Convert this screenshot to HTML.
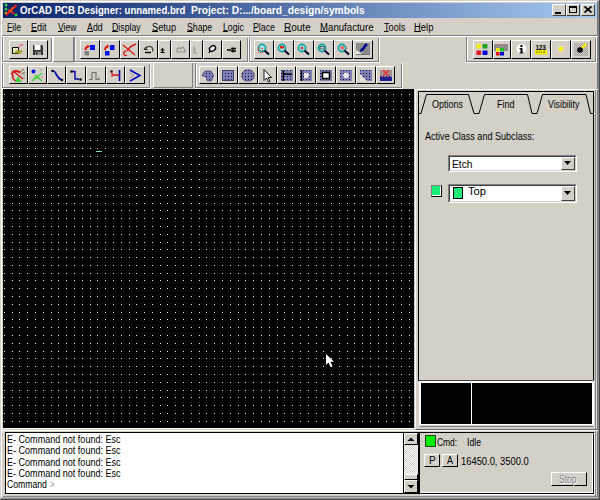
<!DOCTYPE html>
<html><head><meta charset="utf-8"><style>
html,body{margin:0;padding:0;width:600px;height:500px;overflow:hidden;background:#d4d0c8}
body{position:relative;font-family:"Liberation Sans",sans-serif}
div{position:absolute}
.t{position:absolute;white-space:pre;line-height:1;color:#000;transform-origin:0 0}
u{text-decoration:underline;text-underline-offset:0px}
</style></head><body>
<div style="left:0px;top:0px;width:600px;height:500px;background:#d4d0c8"></div>
<div style="left:1px;top:1px;width:597px;height:1px;background:#fff"></div>
<div style="left:1px;top:1px;width:1px;height:497px;background:#fff"></div>
<div style="left:599px;top:0px;width:1px;height:500px;background:#454545"></div>
<div style="left:0px;top:499px;width:600px;height:1px;background:#454545"></div>
<div style="left:598px;top:1px;width:1px;height:498px;background:#8a8a8a"></div>
<div style="left:1px;top:498px;width:598px;height:1px;background:#8a8a8a"></div>
<div style="left:597px;top:1px;width:1px;height:497px;background:#7a7a7a"></div>
<div style="left:1px;top:497px;width:597px;height:1px;background:#b8b8b8"></div>
<div style="left:596px;top:89px;width:1px;height:408px;background:#d8d8d8"></div>
<div style="left:3px;top:496px;width:594px;height:1px;background:#888"></div>
<div style="left:595px;top:89px;width:1px;height:408px;background:#888"></div>
<div style="left:3px;top:3px;width:594px;height:15px;background:linear-gradient(to right,#0a246a,#a6caf0)"></div>
<svg style="position:absolute;left:4px;top:3px" width="14" height="14" viewBox="0 0 14 14">
<circle cx="2" cy="2" r="1.5" fill="#30d040"/><circle cx="2" cy="6" r="1.5" fill="#30d040"/><circle cx="2" cy="10" r="1.5" fill="#90c030"/>
<path d="M2 12 L12.5 2" stroke="#e82010" stroke-width="2.4"/><path d="M4 6.5 L10.5 11" stroke="#e02818" stroke-width="2"/><path d="M6 9 l3-5" stroke="#f07010" stroke-width="1.3"/>
<circle cx="12" cy="12" r="1.4" fill="#30d040"/></svg>
<span class="t" style="left:20.00px;top:5px;font:bold 11px 'Liberation Sans';line-height:1;transform:scaleX(0.873);color:#fff">OrCAD PCB Designer: unnamed.brd</span>
<span class="t" style="left:191.08px;top:5px;font:bold 11px 'Liberation Sans';line-height:1;transform:scaleX(0.925);color:#fff">Project: D:.../board_design/symbols</span>
<div style="left:552px;top:4px;width:14px;height:12px;background:#d4d0c8;border-top:1px solid #fff;border-left:1px solid #fff;border-right:1px solid #404040;border-bottom:1px solid #404040;box-sizing:border-box"></div>
<div style="left:555px;top:12px;width:6px;height:2px;background:#000"></div>
<div style="left:566px;top:4px;width:14px;height:12px;background:#d4d0c8;border-top:1px solid #fff;border-left:1px solid #fff;border-right:1px solid #404040;border-bottom:1px solid #404040;box-sizing:border-box"></div>
<div style="left:569px;top:6px;width:8px;height:7px;border:1px solid #000;border-top-width:2px;box-sizing:border-box"></div>
<div style="left:581px;top:4px;width:14px;height:12px;background:#d4d0c8;border-top:1px solid #fff;border-left:1px solid #fff;border-right:1px solid #404040;border-bottom:1px solid #404040;box-sizing:border-box"></div>
<svg style="position:absolute;left:584px;top:6px" width="8" height="7" viewBox="0 0 8 7"><path d="M0.5 0.5 L7.5 6.5 M7.5 0.5 L0.5 6.5" stroke="#000" stroke-width="1.6"/></svg>
<span class="t" style="left:7.13px;top:23px;font:10px 'Liberation Sans';line-height:1;transform:scaleX(0.867);"><u>F</u>ile</span>
<span class="t" style="left:30.59px;top:23px;font:10px 'Liberation Sans';line-height:1;transform:scaleX(0.906);"><u>E</u>dit</span>
<span class="t" style="left:58.00px;top:23px;font:10px 'Liberation Sans';line-height:1;transform:scaleX(0.857);"><u>V</u>iew</span>
<span class="t" style="left:87.00px;top:23px;font:10px 'Liberation Sans';line-height:1;transform:scaleX(0.882);"><u>A</u>dd</span>
<span class="t" style="left:112.12px;top:23px;font:10px 'Liberation Sans';line-height:1;transform:scaleX(0.875);"><u>D</u>isplay</span>
<span class="t" style="left:152.08px;top:23px;font:10px 'Liberation Sans';line-height:1;transform:scaleX(0.920);"><u>S</u>etup</span>
<span class="t" style="left:186.63px;top:23px;font:10px 'Liberation Sans';line-height:1;transform:scaleX(0.870);"><u>S</u>hape</span>
<span class="t" style="left:223.13px;top:23px;font:10px 'Liberation Sans';line-height:1;transform:scaleX(0.870);"><u>L</u>ogic</span>
<span class="t" style="left:253.12px;top:23px;font:10px 'Liberation Sans';line-height:1;transform:scaleX(0.875);"><u>P</u>lace</span>
<span class="t" style="left:284.00px;top:23px;font:10px 'Liberation Sans';line-height:1;transform:scaleX(1.000);"><u>R</u>oute</span>
<span class="t" style="left:320.04px;top:23px;font:10px 'Liberation Sans';line-height:1;transform:scaleX(0.963);"><u>M</u>anufacture</span>
<span class="t" style="left:384.00px;top:23px;font:10px 'Liberation Sans';line-height:1;transform:scaleX(0.913);"><u>T</u>ools</span>
<span class="t" style="left:414.05px;top:23px;font:10px 'Liberation Sans';line-height:1;transform:scaleX(0.947);"><u>H</u>elp</span>
<div style="left:2px;top:35px;width:596px;height:1px;background:#808080"></div>
<div style="left:2px;top:36px;width:596px;height:1px;background:#fff"></div>
<div style="left:2px;top:37px;width:1px;height:26px;background:#808080"></div>
<div style="left:3px;top:38px;width:1px;height:24px;background:#fff"></div>
<div style="left:51px;top:38px;width:1px;height:24px;background:#808080"></div>
<div style="left:52px;top:37px;width:1px;height:26px;background:#fff"></div>
<div style="left:3px;top:61px;width:49px;height:1px;background:#808080"></div>
<div style="left:2px;top:62px;width:51px;height:1px;background:#fff"></div>
<div style="left:9px;top:40px;width:19px;height:19px;background:#d4d0c8;border-top:1px solid #fff;border-left:1px solid #fff;border-right:1px solid #000;border-bottom:1px solid #000;box-sizing:border-box"></div>
<svg style="position:absolute;left:9px;top:40px" width="19" height="19" viewBox="0 0 19 19"><path d="M3.5 7.5 h6 v6 h-6z" fill="#e8e8b8" stroke="#000"/><path d="M5 13.5 l2-3 h7 l-2 3z" fill="#98a020"/><path d="M10 7 q1-3 4-2" stroke="#f090a0" stroke-width="1.6" fill="none"/><path d="M12.5 3.5 l2 1.5 l-2 1.2z" fill="#e06080"/></svg>
<div style="left:28px;top:40px;width:20px;height:19px;background:#d4d0c8;border-top:1px solid #fff;border-left:1px solid #fff;border-right:1px solid #000;border-bottom:1px solid #000;box-sizing:border-box"></div>
<svg style="position:absolute;left:28px;top:40px" width="20" height="19" viewBox="0 0 20 19"><path d="M5 5 h9 l1 1 v9 h-10z" fill="#303030"/><rect x="6.5" y="5" width="6" height="5" fill="#fff"/><rect x="7" y="11.5" width="6" height="3.5" fill="#909090"/><rect x="8" y="12" width="1.5" height="2.5" fill="#303030"/></svg>
<div style="left:53px;top:37px;width:21px;height:25px;background:#d4d0c8;border-left:1px solid #fff;border-right:1px solid #808080;border-bottom:1px solid #808080;box-sizing:border-box"></div>
<div style="left:74px;top:37px;width:1px;height:26px;background:#808080"></div>
<div style="left:75px;top:38px;width:1px;height:24px;background:#fff"></div>
<div style="left:247px;top:38px;width:1px;height:24px;background:#808080"></div>
<div style="left:248px;top:37px;width:1px;height:26px;background:#fff"></div>
<div style="left:75px;top:61px;width:173px;height:1px;background:#808080"></div>
<div style="left:74px;top:62px;width:175px;height:1px;background:#fff"></div>
<div style="left:80px;top:40px;width:20px;height:19px;background:#d4d0c8;border-top:1px solid #fff;border-left:1px solid #fff;border-right:1px solid #000;border-bottom:1px solid #000;box-sizing:border-box"></div>
<svg style="position:absolute;left:80px;top:40px" width="20" height="19" viewBox="0 0 20 19"><path d="M5.5 10 q0-3 3-3.5" stroke="#e01818" stroke-width="2" fill="none"/><path d="M7.5 4.5 l2.5 2 l-3 1.5z" fill="#e01818"/><rect x="10" y="5" width="5" height="5" fill="#0010e8"/><rect x="4.5" y="11" width="4.5" height="4.5" fill="#808080"/></svg>
<div style="left:100px;top:40px;width:20px;height:19px;background:#d4d0c8;border-top:1px solid #fff;border-left:1px solid #fff;border-right:1px solid #000;border-bottom:1px solid #000;box-sizing:border-box"></div>
<svg style="position:absolute;left:100px;top:40px" width="20" height="19" viewBox="0 0 20 19"><path d="M5 10 q0-3 3-3.5" stroke="#e01818" stroke-width="2" fill="none"/><path d="M7 4.5 l2.5 2 l-3 1.5z" fill="#e01818"/><rect x="10" y="5" width="4.5" height="5" fill="#0010e8"/><rect x="5" y="11" width="4.5" height="4.5" fill="#0010e8"/></svg>
<div style="left:120px;top:40px;width:19px;height:19px;background:#d4d0c8;border-top:1px solid #fff;border-left:1px solid #fff;border-right:1px solid #000;border-bottom:1px solid #000;box-sizing:border-box"></div>
<svg style="position:absolute;left:120px;top:40px" width="19" height="19" viewBox="0 0 19 19"><path d="M3 5 L15 15 M16 4 Q10 6 7 11" stroke="#d81818" stroke-width="1.4" fill="none"/><path d="M6 11 q-3 1 -2 3.5 q1 2 3 0.5" stroke="#d81818" stroke-width="1.4" fill="none"/></svg>
<div style="left:139px;top:40px;width:19px;height:19px;background:#d4d0c8;border-top:1px solid #fff;border-left:1px solid #fff;border-right:1px solid #000;border-bottom:1px solid #000;box-sizing:border-box"></div>
<svg style="position:absolute;left:139px;top:40px" width="19" height="19" viewBox="0 0 19 19"><path d="M7 7 l-1.5 2.5 h3" fill="none" stroke="#202020" stroke-width="1.2"/><path d="M6.5 9 q2-4 6-2 q2 1.5 1 4.5" stroke="#404040" stroke-width="1.2" fill="none"/><path d="M6 12.5 h6" stroke="#000" stroke-width="1.4"/></svg>
<div style="left:158px;top:40px;width:13px;height:19px;background:#d4d0c8;border-top:1px solid #fff;border-left:1px solid #fff;border-right:1px solid #000;border-bottom:1px solid #000;box-sizing:border-box"></div>
<svg style="position:absolute;left:158px;top:40px" width="13" height="19" viewBox="0 0 13 19"><path d="M4.5 8 v5 M2.5 10 h4 M2.5 12.5 h4" stroke="#000" stroke-width="1.2"/></svg>
<div style="left:171px;top:40px;width:19px;height:19px;background:#d4d0c8;border-top:1px solid #fff;border-left:1px solid #fff;border-right:1px solid #000;border-bottom:1px solid #000;box-sizing:border-box"></div>
<svg style="position:absolute;left:171px;top:40px" width="19" height="19" viewBox="0 0 19 19"><path d="M6 12 h9 M6 12 v-3 l2 -1.5 l1.5 1.5 l2 -2 l2 2 v3" stroke="#909090" stroke-width="1.2" fill="none"/></svg>
<div style="left:190px;top:40px;width:13px;height:19px;background:#d4d0c8;border-top:1px solid #fff;border-left:1px solid #fff;border-right:1px solid #000;border-bottom:1px solid #000;box-sizing:border-box"></div>
<svg style="position:absolute;left:190px;top:40px" width="13" height="19" viewBox="0 0 13 19"><path d="M4 6.5 v6.5 h3 M4 10 h2" stroke="#909090" stroke-width="1.2" fill="none"/></svg>
<div style="left:203px;top:40px;width:19px;height:19px;background:#d4d0c8;border-top:1px solid #fff;border-left:1px solid #fff;border-right:1px solid #000;border-bottom:1px solid #000;box-sizing:border-box"></div>
<svg style="position:absolute;left:203px;top:40px" width="19" height="19" viewBox="0 0 19 19"><ellipse cx="9.5" cy="8.5" rx="3.3" ry="2.4" fill="#f0f0f0" stroke="#000" stroke-width="1.4" transform="rotate(-35 9.5 8.5)"/><path d="M7 11 l-1 2" stroke="#000" stroke-width="1.2"/></svg>
<div style="left:222px;top:40px;width:19px;height:19px;background:#d4d0c8;border-top:1px solid #fff;border-left:1px solid #fff;border-right:1px solid #000;border-bottom:1px solid #000;box-sizing:border-box"></div>
<svg style="position:absolute;left:222px;top:40px" width="19" height="19" viewBox="0 0 19 19"><path d="M5 10 h4 M9 8.5 h5 M9 11 h5 M11 7.5 v5" stroke="#000" stroke-width="1.3" fill="none"/></svg>
<div style="left:249px;top:37px;width:1px;height:26px;background:#808080"></div>
<div style="left:250px;top:38px;width:1px;height:24px;background:#fff"></div>
<div style="left:378px;top:38px;width:1px;height:24px;background:#808080"></div>
<div style="left:379px;top:37px;width:1px;height:26px;background:#fff"></div>
<div style="left:250px;top:61px;width:129px;height:1px;background:#808080"></div>
<div style="left:249px;top:62px;width:131px;height:1px;background:#fff"></div>
<div style="left:254px;top:40px;width:20px;height:19px;background:#d4d0c8;border-top:1px solid #fff;border-left:1px solid #fff;border-right:1px solid #000;border-bottom:1px solid #000;box-sizing:border-box"></div>
<svg style="position:absolute;left:254px;top:40px" width="20" height="19" viewBox="0 0 20 19"><circle cx="8" cy="8" r="3.6" fill="#a8e8e8" stroke="#10a0a0" stroke-width="1.6"/><rect x="4.5" y="8" width="4" height="4.5" fill="none" stroke="#e01818" stroke-dasharray="1 1"/><path d="M10.5 10.5 L15 14.5" stroke="#000030" stroke-width="2"/></svg>
<div style="left:274px;top:40px;width:20px;height:19px;background:#d4d0c8;border-top:1px solid #fff;border-left:1px solid #fff;border-right:1px solid #000;border-bottom:1px solid #000;box-sizing:border-box"></div>
<svg style="position:absolute;left:274px;top:40px" width="20" height="19" viewBox="0 0 20 19"><circle cx="8" cy="8" r="3.6" fill="#a8e8e8" stroke="#10a0a0" stroke-width="1.6"/><rect x="6" y="6" width="4" height="2.5" fill="#e01818"/><path d="M10.5 10.5 L15 14.5" stroke="#000030" stroke-width="2"/></svg>
<div style="left:294px;top:40px;width:20px;height:19px;background:#d4d0c8;border-top:1px solid #fff;border-left:1px solid #fff;border-right:1px solid #000;border-bottom:1px solid #000;box-sizing:border-box"></div>
<svg style="position:absolute;left:294px;top:40px" width="20" height="19" viewBox="0 0 20 19"><circle cx="8" cy="8" r="3.6" fill="#a8e8e8" stroke="#10a0a0" stroke-width="1.6"/><path d="M6.5 8 h3 M8 6.5 v3" stroke="#e01818" stroke-width="1.2"/><path d="M10.5 10.5 L15 14.5" stroke="#000030" stroke-width="2"/></svg>
<div style="left:314px;top:40px;width:20px;height:19px;background:#d4d0c8;border-top:1px solid #fff;border-left:1px solid #fff;border-right:1px solid #000;border-bottom:1px solid #000;box-sizing:border-box"></div>
<svg style="position:absolute;left:314px;top:40px" width="20" height="19" viewBox="0 0 20 19"><circle cx="8" cy="8" r="3.6" fill="#a8e8e8" stroke="#10a0a0" stroke-width="1.6"/><rect x="6" y="6.5" width="4" height="2.5" fill="none" stroke="#404040" stroke-width="0.8"/><path d="M10.5 10.5 L15 14.5" stroke="#000030" stroke-width="2"/></svg>
<div style="left:334px;top:40px;width:19px;height:19px;background:#d4d0c8;border-top:1px solid #fff;border-left:1px solid #fff;border-right:1px solid #000;border-bottom:1px solid #000;box-sizing:border-box"></div>
<svg style="position:absolute;left:334px;top:40px" width="19" height="19" viewBox="0 0 19 19"><circle cx="8" cy="8" r="3.6" fill="#a8e8e8" stroke="#10a0a0" stroke-width="1.6"/><rect x="6.5" y="6" width="3.5" height="3.5" fill="#e07070"/><path d="M12 6 v3" stroke="#f05050" stroke-dasharray="1 1"/><path d="M10.5 10.5 L15 14.5" stroke="#000030" stroke-width="2"/></svg>
<div style="left:353px;top:40px;width:20px;height:19px;background:#d4d0c8;border-top:1px solid #fff;border-left:1px solid #fff;border-right:1px solid #000;border-bottom:1px solid #000;box-sizing:border-box"></div>
<svg style="position:absolute;left:353px;top:40px" width="20" height="19" viewBox="0 0 20 19"><rect x="3" y="3" width="14" height="11" fill="#8c8c8c"/><path d="M3 14 L3 10 L9 14z" fill="#f0f0e0"/><path d="M3 14 h14 v1 h-14z" fill="#707070"/><path d="M8 10 q3-1 4-4 l2-2" stroke="#000090" stroke-width="2.6" fill="none"/><path d="M7 11 l2-1" stroke="#000090" stroke-width="1.5"/></svg>
<div style="left:466px;top:37px;width:1px;height:26px;background:#808080"></div>
<div style="left:467px;top:38px;width:1px;height:24px;background:#fff"></div>
<div style="left:595px;top:38px;width:1px;height:24px;background:#808080"></div>
<div style="left:596px;top:37px;width:1px;height:26px;background:#fff"></div>
<div style="left:467px;top:61px;width:129px;height:1px;background:#808080"></div>
<div style="left:466px;top:62px;width:131px;height:1px;background:#fff"></div>
<div style="left:473px;top:40px;width:20px;height:19px;background:#d4d0c8;border-top:1px solid #fff;border-left:1px solid #fff;border-right:1px solid #000;border-bottom:1px solid #000;box-sizing:border-box"></div>
<svg style="position:absolute;left:473px;top:40px" width="20" height="19" viewBox="0 0 20 19"><rect x="3.5" y="4" width="4.5" height="4.5" rx="0.8" fill="#f0f010"/><rect x="9.5" y="4" width="5" height="4.5" rx="0.8" fill="#20a020"/><rect x="3.5" y="10.5" width="4.5" height="4.5" rx="0.8" fill="#e01818"/><rect x="9.5" y="10.5" width="5" height="4.5" rx="0.8" fill="#0000d0"/></svg>
<div style="left:493px;top:40px;width:18px;height:19px;background:#d4d0c8;border-top:1px solid #fff;border-left:1px solid #fff;border-right:1px solid #000;border-bottom:1px solid #000;box-sizing:border-box"></div>
<svg style="position:absolute;left:493px;top:40px" width="18" height="19" viewBox="0 0 18 19"><rect x="1" y="4" width="14" height="7" fill="#8c8c8c"/><rect x="1" y="4.5" width="14" height="1" fill="#b08080"/><rect x="3" y="8" width="3.5" height="3.5" fill="#f0f010"/><rect x="7" y="8" width="4" height="3.5" fill="#20c020"/><rect x="3" y="12" width="3.5" height="3.5" fill="#e01818"/><rect x="7" y="12" width="4" height="3.5" fill="#0000d0"/></svg>
<div style="left:511px;top:40px;width:20px;height:19px;background:#d4d0c8;border-top:1px solid #fff;border-left:1px solid #fff;border-right:1px solid #000;border-bottom:1px solid #000;box-sizing:border-box"></div>
<svg style="position:absolute;left:511px;top:40px" width="20" height="19" viewBox="0 0 20 19"><circle cx="10.5" cy="9" r="5" fill="#fff"/><rect x="9.5" y="5" width="2" height="2" fill="#000"/><path d="M8.5 8 h3 v4.5 h1 v1 h-4 v-1 h1 v-3.5 h-1z" fill="#000"/></svg>
<div style="left:531px;top:40px;width:20px;height:19px;background:#d4d0c8;border-top:1px solid #fff;border-left:1px solid #fff;border-right:1px solid #000;border-bottom:1px solid #000;box-sizing:border-box"></div>
<svg style="position:absolute;left:531px;top:40px" width="20" height="19" viewBox="0 0 20 19"><text x="4.5" y="9.5" font-size="6.5" font-family="Liberation Sans" font-weight="bold" fill="#000" letter-spacing="-0.3">123</text><rect x="4" y="10" width="12" height="4.5" fill="#f0f000"/><path d="M5 12 h10" stroke="#303000" stroke-width="0.8" stroke-dasharray="1.5 1"/></svg>
<div style="left:551px;top:40px;width:20px;height:19px;background:#d4d0c8;border-top:1px solid #fff;border-left:1px solid #fff;border-right:1px solid #000;border-bottom:1px solid #000;box-sizing:border-box"></div>
<svg style="position:absolute;left:551px;top:40px" width="20" height="19" viewBox="0 0 20 19"><circle cx="10" cy="9" r="3.5" fill="#f0f090" opacity="0.6"/><circle cx="10" cy="9" r="2" fill="#f8f000"/></svg>
<div style="left:571px;top:40px;width:20px;height:19px;background:#d4d0c8;border-top:1px solid #fff;border-left:1px solid #fff;border-right:1px solid #000;border-bottom:1px solid #000;box-sizing:border-box"></div>
<svg style="position:absolute;left:571px;top:40px" width="20" height="19" viewBox="0 0 20 19"><defs><pattern id="dg" width="2" height="2" patternUnits="userSpaceOnUse"><rect width="1" height="1" fill="#909090"/><rect x="1" y="1" width="1" height="1" fill="#909090"/></pattern></defs><rect x="3" y="3" width="14" height="13" fill="url(#dg)" opacity="0.8"/><path d="M11 8 l4-4" stroke="#f0f000" stroke-width="2.5"/><circle cx="9" cy="10" r="2.8" fill="#000"/></svg>
<div style="left:2px;top:63px;width:1px;height:26px;background:#808080"></div>
<div style="left:3px;top:64px;width:1px;height:24px;background:#fff"></div>
<div style="left:149px;top:64px;width:1px;height:24px;background:#808080"></div>
<div style="left:150px;top:63px;width:1px;height:26px;background:#fff"></div>
<div style="left:3px;top:87px;width:147px;height:1px;background:#808080"></div>
<div style="left:2px;top:88px;width:149px;height:1px;background:#fff"></div>
<div style="left:9px;top:66px;width:19px;height:18px;background:#d4d0c8;border-top:1px solid #fff;border-left:1px solid #fff;border-right:1px solid #000;border-bottom:1px solid #000;box-sizing:border-box"></div>
<svg style="position:absolute;left:9px;top:66px" width="19" height="18" viewBox="0 0 19 18"><path d="M3 9 q0-4 4-4 q3 0 4 2" stroke="#d81818" stroke-width="1.8" fill="none"/><path d="M4 5 L14 13" stroke="#d81818" stroke-width="1.6"/><path d="M4 9 q-1 4 3 6" stroke="#d81818" stroke-width="1.6" fill="none"/><path d="M6 16 l3-6 l4 6z" fill="#40d040"/><path d="M11 6 l4-3 M12 8 l4-2" stroke="#806040" stroke-width="1"/><circle cx="15" cy="9" r="0.8" fill="#808080"/><circle cx="15" cy="12" r="0.8" fill="#808080"/></svg>
<div style="left:28px;top:66px;width:19px;height:18px;background:#d4d0c8;border-top:1px solid #fff;border-left:1px solid #fff;border-right:1px solid #000;border-bottom:1px solid #000;box-sizing:border-box"></div>
<svg style="position:absolute;left:28px;top:66px" width="19" height="18" viewBox="0 0 19 18"><circle cx="5.5" cy="5.5" r="2" fill="#0010e0"/><path d="M4 15 l10-8 M7 9 l7 6 M6 12 h4" stroke="#40d040" stroke-width="1.6" fill="none"/><path d="M12 4 h2 M13 11 h2" stroke="#909090" stroke-width="1"/></svg>
<div style="left:47px;top:66px;width:19px;height:18px;background:#d4d0c8;border-top:1px solid #fff;border-left:1px solid #fff;border-right:1px solid #000;border-bottom:1px solid #000;box-sizing:border-box"></div>
<svg style="position:absolute;left:47px;top:66px" width="19" height="18" viewBox="0 0 19 18"><path d="M6 5 q2 0 3 3 l2 3 q1 2 4 3" stroke="#0000b0" stroke-width="1.7" fill="none"/><circle cx="5.5" cy="5" r="1.2" fill="#000"/><circle cx="15" cy="14" r="1.2" fill="#000"/></svg>
<div style="left:66px;top:66px;width:20px;height:18px;background:#d4d0c8;border-top:1px solid #fff;border-left:1px solid #fff;border-right:1px solid #000;border-bottom:1px solid #000;box-sizing:border-box"></div>
<svg style="position:absolute;left:66px;top:66px" width="20" height="18" viewBox="0 0 20 18"><path d="M6 5.5 h3 v7.5 h4" stroke="#0000b0" stroke-width="1.4" fill="none"/><circle cx="5.5" cy="5.5" r="1.3" fill="#000"/><circle cx="14.5" cy="13.5" r="1.3" fill="#000"/></svg>
<div style="left:86px;top:66px;width:20px;height:18px;background:#d4d0c8;border-top:1px solid #fff;border-left:1px solid #fff;border-right:1px solid #000;border-bottom:1px solid #000;box-sizing:border-box"></div>
<svg style="position:absolute;left:86px;top:66px" width="20" height="18" viewBox="0 0 20 18"><path d="M3 13.5 h3 v-7 h4 v7 h3 v-2" stroke="#707070" stroke-width="1.2" fill="none"/></svg>
<div style="left:106px;top:66px;width:19px;height:18px;background:#d4d0c8;border-top:1px solid #fff;border-left:1px solid #fff;border-right:1px solid #000;border-bottom:1px solid #000;box-sizing:border-box"></div>
<svg style="position:absolute;left:106px;top:66px" width="19" height="18" viewBox="0 0 19 18"><circle cx="5.5" cy="5.5" r="1.2" fill="#000"/><path d="M6 5 v6" stroke="#d81818" stroke-width="1"/><path d="M6 9 h7" stroke="#e01818" stroke-width="1.6"/><path d="M13.5 4 v11" stroke="#0000b0" stroke-width="1.6"/></svg>
<div style="left:125px;top:66px;width:20px;height:18px;background:#d4d0c8;border-top:1px solid #fff;border-left:1px solid #fff;border-right:1px solid #000;border-bottom:1px solid #000;box-sizing:border-box"></div>
<svg style="position:absolute;left:125px;top:66px" width="20" height="18" viewBox="0 0 20 18"><path d="M5 4 l10 5.5 l-10 5.5" stroke="#0000c0" stroke-width="1.5" fill="none"/><path d="M5 7 l4 2.5 l-4 2.5" stroke="#a0a0a0" stroke-width="1" fill="none"/></svg>
<div style="left:153px;top:63px;width:40px;height:25px;background:#d4d0c8;border-left:1px solid #fff;border-right:1px solid #808080;border-bottom:1px solid #808080;box-sizing:border-box"></div>
<div style="left:195px;top:63px;width:1px;height:26px;background:#808080"></div>
<div style="left:196px;top:64px;width:1px;height:24px;background:#fff"></div>
<div style="left:401px;top:64px;width:1px;height:24px;background:#808080"></div>
<div style="left:402px;top:63px;width:1px;height:26px;background:#fff"></div>
<div style="left:196px;top:87px;width:206px;height:1px;background:#808080"></div>
<div style="left:195px;top:88px;width:208px;height:1px;background:#fff"></div>
<div style="left:199px;top:66px;width:19px;height:18px;background:#d4d0c8;border-top:1px solid #fff;border-left:1px solid #fff;border-right:1px solid #000;border-bottom:1px solid #000;box-sizing:border-box"></div>
<svg style="position:absolute;left:199px;top:66px" width="19" height="18" viewBox="0 0 19 18"><defs><pattern id="p1" width="3" height="3" patternUnits="userSpaceOnUse"><rect width="3" height="3" fill="#8080b0"/><rect x="1" y="1" width="1" height="1" fill="#101060"/></pattern></defs><path d="M3 9.6 L6.2 5 H11.8 L14.6 9.4 L12.2 15 L8.2 14.6 L7 10.6 z" fill="url(#p1)" stroke="#303070" stroke-width="0.8"/></svg>
<div style="left:218px;top:66px;width:20px;height:18px;background:#d4d0c8;border-top:1px solid #fff;border-left:1px solid #fff;border-right:1px solid #000;border-bottom:1px solid #000;box-sizing:border-box"></div>
<svg style="position:absolute;left:218px;top:66px" width="20" height="18" viewBox="0 0 20 18"><defs><pattern id="p2" width="3" height="3" patternUnits="userSpaceOnUse"><rect width="3" height="3" fill="#8080b0"/><rect x="1" y="1" width="1" height="1" fill="#101060"/></pattern></defs><rect x="4.5" y="4.5" width="11" height="10" fill="url(#p2)" stroke="#404070"/></svg>
<div style="left:238px;top:66px;width:20px;height:18px;background:#d4d0c8;border-top:1px solid #fff;border-left:1px solid #fff;border-right:1px solid #000;border-bottom:1px solid #000;box-sizing:border-box"></div>
<svg style="position:absolute;left:238px;top:66px" width="20" height="18" viewBox="0 0 20 18"><defs><pattern id="p3" width="3" height="3" patternUnits="userSpaceOnUse"><rect width="3" height="3" fill="#8080b0"/><rect x="1" y="1" width="1" height="1" fill="#101060"/></pattern></defs><path d="M7 4 h6 l3 3 v5 l-3 3 h-6 l-3-3 v-5z" fill="url(#p3)" stroke="#404070" stroke-width="0.8"/></svg>
<div style="left:258px;top:66px;width:19px;height:18px;background:#d4d0c8;border-top:1px solid #fff;border-left:1px solid #fff;border-right:1px solid #000;border-bottom:1px solid #000;box-sizing:border-box"></div>
<svg style="position:absolute;left:258px;top:66px" width="19" height="18" viewBox="0 0 19 18"><path d="M6 3.5 v11 l2.5-2.5 l2 4 l1.5-0.8 l-2-3.7 h3.5 z" fill="#fff" stroke="#000" stroke-width="0.9"/></svg>
<div style="left:277px;top:66px;width:19px;height:18px;background:#d4d0c8;border-top:1px solid #fff;border-left:1px solid #fff;border-right:1px solid #000;border-bottom:1px solid #000;box-sizing:border-box"></div>
<svg style="position:absolute;left:277px;top:66px" width="19" height="18" viewBox="0 0 19 18"><defs><pattern id="p5" width="3" height="3" patternUnits="userSpaceOnUse"><rect width="3" height="3" fill="#8080b0"/><rect x="1" y="1" width="1" height="1" fill="#101060"/></pattern></defs><rect x="4" y="4" width="12" height="11" fill="url(#p5)"/><path d="M6.3 4.5 v10.5 M6.3 8.3 h8.7" stroke="#000" stroke-width="1.5" fill="none"/></svg>
<div style="left:296px;top:66px;width:20px;height:18px;background:#d4d0c8;border-top:1px solid #fff;border-left:1px solid #fff;border-right:1px solid #000;border-bottom:1px solid #000;box-sizing:border-box"></div>
<svg style="position:absolute;left:296px;top:66px" width="20" height="18" viewBox="0 0 20 18"><defs><pattern id="p6" width="3" height="3" patternUnits="userSpaceOnUse"><rect width="3" height="3" fill="#8080b0"/><rect x="1" y="1" width="1" height="1" fill="#101060"/></pattern></defs><rect x="4" y="4" width="12" height="11" fill="url(#p6)"/><path d="M5.5 4.5 v10.5" stroke="#000" stroke-width="1.4"/><path d="M8 7 h4 l1.3 2 l-2 3.3 h-3.3 z" fill="#e8e8e8"/></svg>
<div style="left:316px;top:66px;width:20px;height:18px;background:#d4d0c8;border-top:1px solid #fff;border-left:1px solid #fff;border-right:1px solid #000;border-bottom:1px solid #000;box-sizing:border-box"></div>
<svg style="position:absolute;left:316px;top:66px" width="20" height="18" viewBox="0 0 20 18"><defs><pattern id="p7" width="3" height="3" patternUnits="userSpaceOnUse"><rect width="3" height="3" fill="#8080b0"/><rect x="1" y="1" width="1" height="1" fill="#101060"/></pattern></defs><rect x="4" y="4" width="12" height="11" fill="url(#p7)"/><rect x="6.5" y="6.5" width="7" height="6" fill="#fff" stroke="#000" stroke-width="1.6"/></svg>
<div style="left:336px;top:66px;width:20px;height:18px;background:#d4d0c8;border-top:1px solid #fff;border-left:1px solid #fff;border-right:1px solid #000;border-bottom:1px solid #000;box-sizing:border-box"></div>
<svg style="position:absolute;left:336px;top:66px" width="20" height="18" viewBox="0 0 20 18"><defs><pattern id="p8" width="3" height="3" patternUnits="userSpaceOnUse"><rect width="3" height="3" fill="#8080b0"/><rect x="1" y="1" width="1" height="1" fill="#101060"/></pattern></defs><rect x="4" y="4" width="12" height="11" fill="url(#p8)"/><circle cx="10" cy="9.5" r="2.8" fill="#e8e8e8"/></svg>
<div style="left:356px;top:66px;width:20px;height:18px;background:#d4d0c8;border-top:1px solid #fff;border-left:1px solid #fff;border-right:1px solid #000;border-bottom:1px solid #000;box-sizing:border-box"></div>
<svg style="position:absolute;left:356px;top:66px" width="20" height="18" viewBox="0 0 20 18"><defs><pattern id="p9" width="3" height="3" patternUnits="userSpaceOnUse"><rect width="3" height="3" fill="#8080b0"/><rect x="1" y="1" width="1" height="1" fill="#101060"/></pattern></defs><rect x="4" y="4" width="12" height="11" fill="url(#p9)"/><path d="M4 8 L11 15 H4z" fill="#e8e8d8"/></svg>
<div style="left:376px;top:66px;width:19px;height:18px;background:#d4d0c8;border-top:1px solid #fff;border-left:1px solid #fff;border-right:1px solid #000;border-bottom:1px solid #000;box-sizing:border-box"></div>
<svg style="position:absolute;left:376px;top:66px" width="19" height="18" viewBox="0 0 19 18"><defs><pattern id="pa" width="3" height="3" patternUnits="userSpaceOnUse"><rect width="3" height="3" fill="#8080b0"/><rect x="1" y="1" width="1" height="1" fill="#101060"/></pattern></defs><rect x="4" y="4" width="12" height="11" fill="url(#pa)"/><rect x="4" y="4" width="12" height="6" fill="#a09090"/><path d="M7 4 l6 6 M13 4 l-6 6" stroke="#f03030" stroke-width="1.3"/><rect x="4" y="11" width="12" height="4" fill="#202090"/></svg>
<svg style="position:absolute;left:3px;top:89px" width="411" height="339" viewBox="0 0 411 339" shape-rendering="crispEdges">
<rect width="411" height="339" fill="#000"/><path d="M1 5h1v1h-1zM9 5h1v1h-1zM16 5h1v1h-1zM24 5h1v1h-1zM32 5h1v1h-1zM40 5h1v1h-1zM48 5h1v1h-1zM55 5h1v1h-1zM63 5h1v1h-1zM71 5h1v1h-1zM79 5h1v1h-1zM87 5h1v1h-1zM94 5h1v1h-1zM102 5h1v1h-1zM110 5h1v1h-1zM118 5h1v1h-1zM126 5h1v1h-1zM133 5h1v1h-1zM141 5h1v1h-1zM149 5h1v1h-1zM157 5h1v1h-1zM164 5h1v1h-1zM172 5h1v1h-1zM180 5h1v1h-1zM188 5h1v1h-1zM196 5h1v1h-1zM203 5h1v1h-1zM211 5h1v1h-1zM219 5h1v1h-1zM227 5h1v1h-1zM235 5h1v1h-1zM242 5h1v1h-1zM250 5h1v1h-1zM258 5h1v1h-1zM266 5h1v1h-1zM274 5h1v1h-1zM281 5h1v1h-1zM289 5h1v1h-1zM297 5h1v1h-1zM305 5h1v1h-1zM313 5h1v1h-1zM320 5h1v1h-1zM328 5h1v1h-1zM336 5h1v1h-1zM344 5h1v1h-1zM351 5h1v1h-1zM359 5h1v1h-1zM367 5h1v1h-1zM375 5h1v1h-1zM383 5h1v1h-1zM390 5h1v1h-1zM398 5h1v1h-1zM406 5h1v1h-1zM1 12h1v1h-1zM9 12h1v1h-1zM16 12h1v1h-1zM24 12h1v1h-1zM32 12h1v1h-1zM40 12h1v1h-1zM48 12h1v1h-1zM55 12h1v1h-1zM63 12h1v1h-1zM71 12h1v1h-1zM79 12h1v1h-1zM87 12h1v1h-1zM94 12h1v1h-1zM102 12h1v1h-1zM110 12h1v1h-1zM118 12h1v1h-1zM126 12h1v1h-1zM133 12h1v1h-1zM141 12h1v1h-1zM149 12h1v1h-1zM157 12h1v1h-1zM164 12h1v1h-1zM172 12h1v1h-1zM180 12h1v1h-1zM188 12h1v1h-1zM196 12h1v1h-1zM203 12h1v1h-1zM211 12h1v1h-1zM219 12h1v1h-1zM227 12h1v1h-1zM235 12h1v1h-1zM242 12h1v1h-1zM250 12h1v1h-1zM258 12h1v1h-1zM266 12h1v1h-1zM274 12h1v1h-1zM281 12h1v1h-1zM289 12h1v1h-1zM297 12h1v1h-1zM305 12h1v1h-1zM313 12h1v1h-1zM320 12h1v1h-1zM328 12h1v1h-1zM336 12h1v1h-1zM344 12h1v1h-1zM351 12h1v1h-1zM359 12h1v1h-1zM367 12h1v1h-1zM375 12h1v1h-1zM383 12h1v1h-1zM390 12h1v1h-1zM398 12h1v1h-1zM406 12h1v1h-1zM1 20h1v1h-1zM9 20h1v1h-1zM16 20h1v1h-1zM24 20h1v1h-1zM32 20h1v1h-1zM40 20h1v1h-1zM48 20h1v1h-1zM55 20h1v1h-1zM63 20h1v1h-1zM71 20h1v1h-1zM79 20h1v1h-1zM87 20h1v1h-1zM94 20h1v1h-1zM102 20h1v1h-1zM110 20h1v1h-1zM118 20h1v1h-1zM126 20h1v1h-1zM133 20h1v1h-1zM141 20h1v1h-1zM149 20h1v1h-1zM157 20h1v1h-1zM164 20h1v1h-1zM172 20h1v1h-1zM180 20h1v1h-1zM188 20h1v1h-1zM196 20h1v1h-1zM203 20h1v1h-1zM211 20h1v1h-1zM219 20h1v1h-1zM227 20h1v1h-1zM235 20h1v1h-1zM242 20h1v1h-1zM250 20h1v1h-1zM258 20h1v1h-1zM266 20h1v1h-1zM274 20h1v1h-1zM281 20h1v1h-1zM289 20h1v1h-1zM297 20h1v1h-1zM305 20h1v1h-1zM313 20h1v1h-1zM320 20h1v1h-1zM328 20h1v1h-1zM336 20h1v1h-1zM344 20h1v1h-1zM351 20h1v1h-1zM359 20h1v1h-1zM367 20h1v1h-1zM375 20h1v1h-1zM383 20h1v1h-1zM390 20h1v1h-1zM398 20h1v1h-1zM406 20h1v1h-1zM1 28h1v1h-1zM9 28h1v1h-1zM16 28h1v1h-1zM24 28h1v1h-1zM32 28h1v1h-1zM40 28h1v1h-1zM48 28h1v1h-1zM55 28h1v1h-1zM63 28h1v1h-1zM71 28h1v1h-1zM79 28h1v1h-1zM87 28h1v1h-1zM94 28h1v1h-1zM102 28h1v1h-1zM110 28h1v1h-1zM118 28h1v1h-1zM126 28h1v1h-1zM133 28h1v1h-1zM141 28h1v1h-1zM149 28h1v1h-1zM157 28h1v1h-1zM164 28h1v1h-1zM172 28h1v1h-1zM180 28h1v1h-1zM188 28h1v1h-1zM196 28h1v1h-1zM203 28h1v1h-1zM211 28h1v1h-1zM219 28h1v1h-1zM227 28h1v1h-1zM235 28h1v1h-1zM242 28h1v1h-1zM250 28h1v1h-1zM258 28h1v1h-1zM266 28h1v1h-1zM274 28h1v1h-1zM281 28h1v1h-1zM289 28h1v1h-1zM297 28h1v1h-1zM305 28h1v1h-1zM313 28h1v1h-1zM320 28h1v1h-1zM328 28h1v1h-1zM336 28h1v1h-1zM344 28h1v1h-1zM351 28h1v1h-1zM359 28h1v1h-1zM367 28h1v1h-1zM375 28h1v1h-1zM383 28h1v1h-1zM390 28h1v1h-1zM398 28h1v1h-1zM406 28h1v1h-1zM1 36h1v1h-1zM9 36h1v1h-1zM16 36h1v1h-1zM24 36h1v1h-1zM32 36h1v1h-1zM40 36h1v1h-1zM48 36h1v1h-1zM55 36h1v1h-1zM63 36h1v1h-1zM71 36h1v1h-1zM79 36h1v1h-1zM87 36h1v1h-1zM94 36h1v1h-1zM102 36h1v1h-1zM110 36h1v1h-1zM118 36h1v1h-1zM126 36h1v1h-1zM133 36h1v1h-1zM141 36h1v1h-1zM149 36h1v1h-1zM157 36h1v1h-1zM164 36h1v1h-1zM172 36h1v1h-1zM180 36h1v1h-1zM188 36h1v1h-1zM196 36h1v1h-1zM203 36h1v1h-1zM211 36h1v1h-1zM219 36h1v1h-1zM227 36h1v1h-1zM235 36h1v1h-1zM242 36h1v1h-1zM250 36h1v1h-1zM258 36h1v1h-1zM266 36h1v1h-1zM274 36h1v1h-1zM281 36h1v1h-1zM289 36h1v1h-1zM297 36h1v1h-1zM305 36h1v1h-1zM313 36h1v1h-1zM320 36h1v1h-1zM328 36h1v1h-1zM336 36h1v1h-1zM344 36h1v1h-1zM351 36h1v1h-1zM359 36h1v1h-1zM367 36h1v1h-1zM375 36h1v1h-1zM383 36h1v1h-1zM390 36h1v1h-1zM398 36h1v1h-1zM406 36h1v1h-1zM1 43h1v1h-1zM9 43h1v1h-1zM16 43h1v1h-1zM24 43h1v1h-1zM32 43h1v1h-1zM40 43h1v1h-1zM48 43h1v1h-1zM55 43h1v1h-1zM63 43h1v1h-1zM71 43h1v1h-1zM79 43h1v1h-1zM87 43h1v1h-1zM94 43h1v1h-1zM102 43h1v1h-1zM110 43h1v1h-1zM118 43h1v1h-1zM126 43h1v1h-1zM133 43h1v1h-1zM141 43h1v1h-1zM149 43h1v1h-1zM157 43h1v1h-1zM164 43h1v1h-1zM172 43h1v1h-1zM180 43h1v1h-1zM188 43h1v1h-1zM196 43h1v1h-1zM203 43h1v1h-1zM211 43h1v1h-1zM219 43h1v1h-1zM227 43h1v1h-1zM235 43h1v1h-1zM242 43h1v1h-1zM250 43h1v1h-1zM258 43h1v1h-1zM266 43h1v1h-1zM274 43h1v1h-1zM281 43h1v1h-1zM289 43h1v1h-1zM297 43h1v1h-1zM305 43h1v1h-1zM313 43h1v1h-1zM320 43h1v1h-1zM328 43h1v1h-1zM336 43h1v1h-1zM344 43h1v1h-1zM351 43h1v1h-1zM359 43h1v1h-1zM367 43h1v1h-1zM375 43h1v1h-1zM383 43h1v1h-1zM390 43h1v1h-1zM398 43h1v1h-1zM406 43h1v1h-1zM1 51h1v1h-1zM9 51h1v1h-1zM16 51h1v1h-1zM24 51h1v1h-1zM32 51h1v1h-1zM40 51h1v1h-1zM48 51h1v1h-1zM55 51h1v1h-1zM63 51h1v1h-1zM71 51h1v1h-1zM79 51h1v1h-1zM87 51h1v1h-1zM94 51h1v1h-1zM102 51h1v1h-1zM110 51h1v1h-1zM118 51h1v1h-1zM126 51h1v1h-1zM133 51h1v1h-1zM141 51h1v1h-1zM149 51h1v1h-1zM157 51h1v1h-1zM164 51h1v1h-1zM172 51h1v1h-1zM180 51h1v1h-1zM188 51h1v1h-1zM196 51h1v1h-1zM203 51h1v1h-1zM211 51h1v1h-1zM219 51h1v1h-1zM227 51h1v1h-1zM235 51h1v1h-1zM242 51h1v1h-1zM250 51h1v1h-1zM258 51h1v1h-1zM266 51h1v1h-1zM274 51h1v1h-1zM281 51h1v1h-1zM289 51h1v1h-1zM297 51h1v1h-1zM305 51h1v1h-1zM313 51h1v1h-1zM320 51h1v1h-1zM328 51h1v1h-1zM336 51h1v1h-1zM344 51h1v1h-1zM351 51h1v1h-1zM359 51h1v1h-1zM367 51h1v1h-1zM375 51h1v1h-1zM383 51h1v1h-1zM390 51h1v1h-1zM398 51h1v1h-1zM406 51h1v1h-1zM1 59h1v1h-1zM9 59h1v1h-1zM16 59h1v1h-1zM24 59h1v1h-1zM32 59h1v1h-1zM40 59h1v1h-1zM48 59h1v1h-1zM55 59h1v1h-1zM63 59h1v1h-1zM71 59h1v1h-1zM79 59h1v1h-1zM87 59h1v1h-1zM94 59h1v1h-1zM102 59h1v1h-1zM110 59h1v1h-1zM118 59h1v1h-1zM126 59h1v1h-1zM133 59h1v1h-1zM141 59h1v1h-1zM149 59h1v1h-1zM157 59h1v1h-1zM164 59h1v1h-1zM172 59h1v1h-1zM180 59h1v1h-1zM188 59h1v1h-1zM196 59h1v1h-1zM203 59h1v1h-1zM211 59h1v1h-1zM219 59h1v1h-1zM227 59h1v1h-1zM235 59h1v1h-1zM242 59h1v1h-1zM250 59h1v1h-1zM258 59h1v1h-1zM266 59h1v1h-1zM274 59h1v1h-1zM281 59h1v1h-1zM289 59h1v1h-1zM297 59h1v1h-1zM305 59h1v1h-1zM313 59h1v1h-1zM320 59h1v1h-1zM328 59h1v1h-1zM336 59h1v1h-1zM344 59h1v1h-1zM351 59h1v1h-1zM359 59h1v1h-1zM367 59h1v1h-1zM375 59h1v1h-1zM383 59h1v1h-1zM390 59h1v1h-1zM398 59h1v1h-1zM406 59h1v1h-1zM1 67h1v1h-1zM9 67h1v1h-1zM16 67h1v1h-1zM24 67h1v1h-1zM32 67h1v1h-1zM40 67h1v1h-1zM48 67h1v1h-1zM55 67h1v1h-1zM63 67h1v1h-1zM71 67h1v1h-1zM79 67h1v1h-1zM87 67h1v1h-1zM94 67h1v1h-1zM102 67h1v1h-1zM110 67h1v1h-1zM118 67h1v1h-1zM126 67h1v1h-1zM133 67h1v1h-1zM141 67h1v1h-1zM149 67h1v1h-1zM157 67h1v1h-1zM164 67h1v1h-1zM172 67h1v1h-1zM180 67h1v1h-1zM188 67h1v1h-1zM196 67h1v1h-1zM203 67h1v1h-1zM211 67h1v1h-1zM219 67h1v1h-1zM227 67h1v1h-1zM235 67h1v1h-1zM242 67h1v1h-1zM250 67h1v1h-1zM258 67h1v1h-1zM266 67h1v1h-1zM274 67h1v1h-1zM281 67h1v1h-1zM289 67h1v1h-1zM297 67h1v1h-1zM305 67h1v1h-1zM313 67h1v1h-1zM320 67h1v1h-1zM328 67h1v1h-1zM336 67h1v1h-1zM344 67h1v1h-1zM351 67h1v1h-1zM359 67h1v1h-1zM367 67h1v1h-1zM375 67h1v1h-1zM383 67h1v1h-1zM390 67h1v1h-1zM398 67h1v1h-1zM406 67h1v1h-1zM1 75h1v1h-1zM9 75h1v1h-1zM16 75h1v1h-1zM24 75h1v1h-1zM32 75h1v1h-1zM40 75h1v1h-1zM48 75h1v1h-1zM55 75h1v1h-1zM63 75h1v1h-1zM71 75h1v1h-1zM79 75h1v1h-1zM87 75h1v1h-1zM94 75h1v1h-1zM102 75h1v1h-1zM110 75h1v1h-1zM118 75h1v1h-1zM126 75h1v1h-1zM133 75h1v1h-1zM141 75h1v1h-1zM149 75h1v1h-1zM157 75h1v1h-1zM164 75h1v1h-1zM172 75h1v1h-1zM180 75h1v1h-1zM188 75h1v1h-1zM196 75h1v1h-1zM203 75h1v1h-1zM211 75h1v1h-1zM219 75h1v1h-1zM227 75h1v1h-1zM235 75h1v1h-1zM242 75h1v1h-1zM250 75h1v1h-1zM258 75h1v1h-1zM266 75h1v1h-1zM274 75h1v1h-1zM281 75h1v1h-1zM289 75h1v1h-1zM297 75h1v1h-1zM305 75h1v1h-1zM313 75h1v1h-1zM320 75h1v1h-1zM328 75h1v1h-1zM336 75h1v1h-1zM344 75h1v1h-1zM351 75h1v1h-1zM359 75h1v1h-1zM367 75h1v1h-1zM375 75h1v1h-1zM383 75h1v1h-1zM390 75h1v1h-1zM398 75h1v1h-1zM406 75h1v1h-1zM1 82h1v1h-1zM9 82h1v1h-1zM16 82h1v1h-1zM24 82h1v1h-1zM32 82h1v1h-1zM40 82h1v1h-1zM48 82h1v1h-1zM55 82h1v1h-1zM63 82h1v1h-1zM71 82h1v1h-1zM79 82h1v1h-1zM87 82h1v1h-1zM94 82h1v1h-1zM102 82h1v1h-1zM110 82h1v1h-1zM118 82h1v1h-1zM126 82h1v1h-1zM133 82h1v1h-1zM141 82h1v1h-1zM149 82h1v1h-1zM157 82h1v1h-1zM164 82h1v1h-1zM172 82h1v1h-1zM180 82h1v1h-1zM188 82h1v1h-1zM196 82h1v1h-1zM203 82h1v1h-1zM211 82h1v1h-1zM219 82h1v1h-1zM227 82h1v1h-1zM235 82h1v1h-1zM242 82h1v1h-1zM250 82h1v1h-1zM258 82h1v1h-1zM266 82h1v1h-1zM274 82h1v1h-1zM281 82h1v1h-1zM289 82h1v1h-1zM297 82h1v1h-1zM305 82h1v1h-1zM313 82h1v1h-1zM320 82h1v1h-1zM328 82h1v1h-1zM336 82h1v1h-1zM344 82h1v1h-1zM351 82h1v1h-1zM359 82h1v1h-1zM367 82h1v1h-1zM375 82h1v1h-1zM383 82h1v1h-1zM390 82h1v1h-1zM398 82h1v1h-1zM406 82h1v1h-1zM1 90h1v1h-1zM9 90h1v1h-1zM16 90h1v1h-1zM24 90h1v1h-1zM32 90h1v1h-1zM40 90h1v1h-1zM48 90h1v1h-1zM55 90h1v1h-1zM63 90h1v1h-1zM71 90h1v1h-1zM79 90h1v1h-1zM87 90h1v1h-1zM94 90h1v1h-1zM102 90h1v1h-1zM110 90h1v1h-1zM118 90h1v1h-1zM126 90h1v1h-1zM133 90h1v1h-1zM141 90h1v1h-1zM149 90h1v1h-1zM157 90h1v1h-1zM164 90h1v1h-1zM172 90h1v1h-1zM180 90h1v1h-1zM188 90h1v1h-1zM196 90h1v1h-1zM203 90h1v1h-1zM211 90h1v1h-1zM219 90h1v1h-1zM227 90h1v1h-1zM235 90h1v1h-1zM242 90h1v1h-1zM250 90h1v1h-1zM258 90h1v1h-1zM266 90h1v1h-1zM274 90h1v1h-1zM281 90h1v1h-1zM289 90h1v1h-1zM297 90h1v1h-1zM305 90h1v1h-1zM313 90h1v1h-1zM320 90h1v1h-1zM328 90h1v1h-1zM336 90h1v1h-1zM344 90h1v1h-1zM351 90h1v1h-1zM359 90h1v1h-1zM367 90h1v1h-1zM375 90h1v1h-1zM383 90h1v1h-1zM390 90h1v1h-1zM398 90h1v1h-1zM406 90h1v1h-1zM1 98h1v1h-1zM9 98h1v1h-1zM16 98h1v1h-1zM24 98h1v1h-1zM32 98h1v1h-1zM40 98h1v1h-1zM48 98h1v1h-1zM55 98h1v1h-1zM63 98h1v1h-1zM71 98h1v1h-1zM79 98h1v1h-1zM87 98h1v1h-1zM94 98h1v1h-1zM102 98h1v1h-1zM110 98h1v1h-1zM118 98h1v1h-1zM126 98h1v1h-1zM133 98h1v1h-1zM141 98h1v1h-1zM149 98h1v1h-1zM157 98h1v1h-1zM164 98h1v1h-1zM172 98h1v1h-1zM180 98h1v1h-1zM188 98h1v1h-1zM196 98h1v1h-1zM203 98h1v1h-1zM211 98h1v1h-1zM219 98h1v1h-1zM227 98h1v1h-1zM235 98h1v1h-1zM242 98h1v1h-1zM250 98h1v1h-1zM258 98h1v1h-1zM266 98h1v1h-1zM274 98h1v1h-1zM281 98h1v1h-1zM289 98h1v1h-1zM297 98h1v1h-1zM305 98h1v1h-1zM313 98h1v1h-1zM320 98h1v1h-1zM328 98h1v1h-1zM336 98h1v1h-1zM344 98h1v1h-1zM351 98h1v1h-1zM359 98h1v1h-1zM367 98h1v1h-1zM375 98h1v1h-1zM383 98h1v1h-1zM390 98h1v1h-1zM398 98h1v1h-1zM406 98h1v1h-1zM1 106h1v1h-1zM9 106h1v1h-1zM16 106h1v1h-1zM24 106h1v1h-1zM32 106h1v1h-1zM40 106h1v1h-1zM48 106h1v1h-1zM55 106h1v1h-1zM63 106h1v1h-1zM71 106h1v1h-1zM79 106h1v1h-1zM87 106h1v1h-1zM94 106h1v1h-1zM102 106h1v1h-1zM110 106h1v1h-1zM118 106h1v1h-1zM126 106h1v1h-1zM133 106h1v1h-1zM141 106h1v1h-1zM149 106h1v1h-1zM157 106h1v1h-1zM164 106h1v1h-1zM172 106h1v1h-1zM180 106h1v1h-1zM188 106h1v1h-1zM196 106h1v1h-1zM203 106h1v1h-1zM211 106h1v1h-1zM219 106h1v1h-1zM227 106h1v1h-1zM235 106h1v1h-1zM242 106h1v1h-1zM250 106h1v1h-1zM258 106h1v1h-1zM266 106h1v1h-1zM274 106h1v1h-1zM281 106h1v1h-1zM289 106h1v1h-1zM297 106h1v1h-1zM305 106h1v1h-1zM313 106h1v1h-1zM320 106h1v1h-1zM328 106h1v1h-1zM336 106h1v1h-1zM344 106h1v1h-1zM351 106h1v1h-1zM359 106h1v1h-1zM367 106h1v1h-1zM375 106h1v1h-1zM383 106h1v1h-1zM390 106h1v1h-1zM398 106h1v1h-1zM406 106h1v1h-1zM1 114h1v1h-1zM9 114h1v1h-1zM16 114h1v1h-1zM24 114h1v1h-1zM32 114h1v1h-1zM40 114h1v1h-1zM48 114h1v1h-1zM55 114h1v1h-1zM63 114h1v1h-1zM71 114h1v1h-1zM79 114h1v1h-1zM87 114h1v1h-1zM94 114h1v1h-1zM102 114h1v1h-1zM110 114h1v1h-1zM118 114h1v1h-1zM126 114h1v1h-1zM133 114h1v1h-1zM141 114h1v1h-1zM149 114h1v1h-1zM157 114h1v1h-1zM164 114h1v1h-1zM172 114h1v1h-1zM180 114h1v1h-1zM188 114h1v1h-1zM196 114h1v1h-1zM203 114h1v1h-1zM211 114h1v1h-1zM219 114h1v1h-1zM227 114h1v1h-1zM235 114h1v1h-1zM242 114h1v1h-1zM250 114h1v1h-1zM258 114h1v1h-1zM266 114h1v1h-1zM274 114h1v1h-1zM281 114h1v1h-1zM289 114h1v1h-1zM297 114h1v1h-1zM305 114h1v1h-1zM313 114h1v1h-1zM320 114h1v1h-1zM328 114h1v1h-1zM336 114h1v1h-1zM344 114h1v1h-1zM351 114h1v1h-1zM359 114h1v1h-1zM367 114h1v1h-1zM375 114h1v1h-1zM383 114h1v1h-1zM390 114h1v1h-1zM398 114h1v1h-1zM406 114h1v1h-1zM1 121h1v1h-1zM9 121h1v1h-1zM16 121h1v1h-1zM24 121h1v1h-1zM32 121h1v1h-1zM40 121h1v1h-1zM48 121h1v1h-1zM55 121h1v1h-1zM63 121h1v1h-1zM71 121h1v1h-1zM79 121h1v1h-1zM87 121h1v1h-1zM94 121h1v1h-1zM102 121h1v1h-1zM110 121h1v1h-1zM118 121h1v1h-1zM126 121h1v1h-1zM133 121h1v1h-1zM141 121h1v1h-1zM149 121h1v1h-1zM157 121h1v1h-1zM164 121h1v1h-1zM172 121h1v1h-1zM180 121h1v1h-1zM188 121h1v1h-1zM196 121h1v1h-1zM203 121h1v1h-1zM211 121h1v1h-1zM219 121h1v1h-1zM227 121h1v1h-1zM235 121h1v1h-1zM242 121h1v1h-1zM250 121h1v1h-1zM258 121h1v1h-1zM266 121h1v1h-1zM274 121h1v1h-1zM281 121h1v1h-1zM289 121h1v1h-1zM297 121h1v1h-1zM305 121h1v1h-1zM313 121h1v1h-1zM320 121h1v1h-1zM328 121h1v1h-1zM336 121h1v1h-1zM344 121h1v1h-1zM351 121h1v1h-1zM359 121h1v1h-1zM367 121h1v1h-1zM375 121h1v1h-1zM383 121h1v1h-1zM390 121h1v1h-1zM398 121h1v1h-1zM406 121h1v1h-1zM1 129h1v1h-1zM9 129h1v1h-1zM16 129h1v1h-1zM24 129h1v1h-1zM32 129h1v1h-1zM40 129h1v1h-1zM48 129h1v1h-1zM55 129h1v1h-1zM63 129h1v1h-1zM71 129h1v1h-1zM79 129h1v1h-1zM87 129h1v1h-1zM94 129h1v1h-1zM102 129h1v1h-1zM110 129h1v1h-1zM118 129h1v1h-1zM126 129h1v1h-1zM133 129h1v1h-1zM141 129h1v1h-1zM149 129h1v1h-1zM157 129h1v1h-1zM164 129h1v1h-1zM172 129h1v1h-1zM180 129h1v1h-1zM188 129h1v1h-1zM196 129h1v1h-1zM203 129h1v1h-1zM211 129h1v1h-1zM219 129h1v1h-1zM227 129h1v1h-1zM235 129h1v1h-1zM242 129h1v1h-1zM250 129h1v1h-1zM258 129h1v1h-1zM266 129h1v1h-1zM274 129h1v1h-1zM281 129h1v1h-1zM289 129h1v1h-1zM297 129h1v1h-1zM305 129h1v1h-1zM313 129h1v1h-1zM320 129h1v1h-1zM328 129h1v1h-1zM336 129h1v1h-1zM344 129h1v1h-1zM351 129h1v1h-1zM359 129h1v1h-1zM367 129h1v1h-1zM375 129h1v1h-1zM383 129h1v1h-1zM390 129h1v1h-1zM398 129h1v1h-1zM406 129h1v1h-1zM1 137h1v1h-1zM9 137h1v1h-1zM16 137h1v1h-1zM24 137h1v1h-1zM32 137h1v1h-1zM40 137h1v1h-1zM48 137h1v1h-1zM55 137h1v1h-1zM63 137h1v1h-1zM71 137h1v1h-1zM79 137h1v1h-1zM87 137h1v1h-1zM94 137h1v1h-1zM102 137h1v1h-1zM110 137h1v1h-1zM118 137h1v1h-1zM126 137h1v1h-1zM133 137h1v1h-1zM141 137h1v1h-1zM149 137h1v1h-1zM157 137h1v1h-1zM164 137h1v1h-1zM172 137h1v1h-1zM180 137h1v1h-1zM188 137h1v1h-1zM196 137h1v1h-1zM203 137h1v1h-1zM211 137h1v1h-1zM219 137h1v1h-1zM227 137h1v1h-1zM235 137h1v1h-1zM242 137h1v1h-1zM250 137h1v1h-1zM258 137h1v1h-1zM266 137h1v1h-1zM274 137h1v1h-1zM281 137h1v1h-1zM289 137h1v1h-1zM297 137h1v1h-1zM305 137h1v1h-1zM313 137h1v1h-1zM320 137h1v1h-1zM328 137h1v1h-1zM336 137h1v1h-1zM344 137h1v1h-1zM351 137h1v1h-1zM359 137h1v1h-1zM367 137h1v1h-1zM375 137h1v1h-1zM383 137h1v1h-1zM390 137h1v1h-1zM398 137h1v1h-1zM406 137h1v1h-1zM1 145h1v1h-1zM9 145h1v1h-1zM16 145h1v1h-1zM24 145h1v1h-1zM32 145h1v1h-1zM40 145h1v1h-1zM48 145h1v1h-1zM55 145h1v1h-1zM63 145h1v1h-1zM71 145h1v1h-1zM79 145h1v1h-1zM87 145h1v1h-1zM94 145h1v1h-1zM102 145h1v1h-1zM110 145h1v1h-1zM118 145h1v1h-1zM126 145h1v1h-1zM133 145h1v1h-1zM141 145h1v1h-1zM149 145h1v1h-1zM157 145h1v1h-1zM164 145h1v1h-1zM172 145h1v1h-1zM180 145h1v1h-1zM188 145h1v1h-1zM196 145h1v1h-1zM203 145h1v1h-1zM211 145h1v1h-1zM219 145h1v1h-1zM227 145h1v1h-1zM235 145h1v1h-1zM242 145h1v1h-1zM250 145h1v1h-1zM258 145h1v1h-1zM266 145h1v1h-1zM274 145h1v1h-1zM281 145h1v1h-1zM289 145h1v1h-1zM297 145h1v1h-1zM305 145h1v1h-1zM313 145h1v1h-1zM320 145h1v1h-1zM328 145h1v1h-1zM336 145h1v1h-1zM344 145h1v1h-1zM351 145h1v1h-1zM359 145h1v1h-1zM367 145h1v1h-1zM375 145h1v1h-1zM383 145h1v1h-1zM390 145h1v1h-1zM398 145h1v1h-1zM406 145h1v1h-1zM1 153h1v1h-1zM9 153h1v1h-1zM16 153h1v1h-1zM24 153h1v1h-1zM32 153h1v1h-1zM40 153h1v1h-1zM48 153h1v1h-1zM55 153h1v1h-1zM63 153h1v1h-1zM71 153h1v1h-1zM79 153h1v1h-1zM87 153h1v1h-1zM94 153h1v1h-1zM102 153h1v1h-1zM110 153h1v1h-1zM118 153h1v1h-1zM126 153h1v1h-1zM133 153h1v1h-1zM141 153h1v1h-1zM149 153h1v1h-1zM157 153h1v1h-1zM164 153h1v1h-1zM172 153h1v1h-1zM180 153h1v1h-1zM188 153h1v1h-1zM196 153h1v1h-1zM203 153h1v1h-1zM211 153h1v1h-1zM219 153h1v1h-1zM227 153h1v1h-1zM235 153h1v1h-1zM242 153h1v1h-1zM250 153h1v1h-1zM258 153h1v1h-1zM266 153h1v1h-1zM274 153h1v1h-1zM281 153h1v1h-1zM289 153h1v1h-1zM297 153h1v1h-1zM305 153h1v1h-1zM313 153h1v1h-1zM320 153h1v1h-1zM328 153h1v1h-1zM336 153h1v1h-1zM344 153h1v1h-1zM351 153h1v1h-1zM359 153h1v1h-1zM367 153h1v1h-1zM375 153h1v1h-1zM383 153h1v1h-1zM390 153h1v1h-1zM398 153h1v1h-1zM406 153h1v1h-1zM1 160h1v1h-1zM9 160h1v1h-1zM16 160h1v1h-1zM24 160h1v1h-1zM32 160h1v1h-1zM40 160h1v1h-1zM48 160h1v1h-1zM55 160h1v1h-1zM63 160h1v1h-1zM71 160h1v1h-1zM79 160h1v1h-1zM87 160h1v1h-1zM94 160h1v1h-1zM102 160h1v1h-1zM110 160h1v1h-1zM118 160h1v1h-1zM126 160h1v1h-1zM133 160h1v1h-1zM141 160h1v1h-1zM149 160h1v1h-1zM157 160h1v1h-1zM164 160h1v1h-1zM172 160h1v1h-1zM180 160h1v1h-1zM188 160h1v1h-1zM196 160h1v1h-1zM203 160h1v1h-1zM211 160h1v1h-1zM219 160h1v1h-1zM227 160h1v1h-1zM235 160h1v1h-1zM242 160h1v1h-1zM250 160h1v1h-1zM258 160h1v1h-1zM266 160h1v1h-1zM274 160h1v1h-1zM281 160h1v1h-1zM289 160h1v1h-1zM297 160h1v1h-1zM305 160h1v1h-1zM313 160h1v1h-1zM320 160h1v1h-1zM328 160h1v1h-1zM336 160h1v1h-1zM344 160h1v1h-1zM351 160h1v1h-1zM359 160h1v1h-1zM367 160h1v1h-1zM375 160h1v1h-1zM383 160h1v1h-1zM390 160h1v1h-1zM398 160h1v1h-1zM406 160h1v1h-1zM1 168h1v1h-1zM9 168h1v1h-1zM16 168h1v1h-1zM24 168h1v1h-1zM32 168h1v1h-1zM40 168h1v1h-1zM48 168h1v1h-1zM55 168h1v1h-1zM63 168h1v1h-1zM71 168h1v1h-1zM79 168h1v1h-1zM87 168h1v1h-1zM94 168h1v1h-1zM102 168h1v1h-1zM110 168h1v1h-1zM118 168h1v1h-1zM126 168h1v1h-1zM133 168h1v1h-1zM141 168h1v1h-1zM149 168h1v1h-1zM157 168h1v1h-1zM164 168h1v1h-1zM172 168h1v1h-1zM180 168h1v1h-1zM188 168h1v1h-1zM196 168h1v1h-1zM203 168h1v1h-1zM211 168h1v1h-1zM219 168h1v1h-1zM227 168h1v1h-1zM235 168h1v1h-1zM242 168h1v1h-1zM250 168h1v1h-1zM258 168h1v1h-1zM266 168h1v1h-1zM274 168h1v1h-1zM281 168h1v1h-1zM289 168h1v1h-1zM297 168h1v1h-1zM305 168h1v1h-1zM313 168h1v1h-1zM320 168h1v1h-1zM328 168h1v1h-1zM336 168h1v1h-1zM344 168h1v1h-1zM351 168h1v1h-1zM359 168h1v1h-1zM367 168h1v1h-1zM375 168h1v1h-1zM383 168h1v1h-1zM390 168h1v1h-1zM398 168h1v1h-1zM406 168h1v1h-1zM1 176h1v1h-1zM9 176h1v1h-1zM16 176h1v1h-1zM24 176h1v1h-1zM32 176h1v1h-1zM40 176h1v1h-1zM48 176h1v1h-1zM55 176h1v1h-1zM63 176h1v1h-1zM71 176h1v1h-1zM79 176h1v1h-1zM87 176h1v1h-1zM94 176h1v1h-1zM102 176h1v1h-1zM110 176h1v1h-1zM118 176h1v1h-1zM126 176h1v1h-1zM133 176h1v1h-1zM141 176h1v1h-1zM149 176h1v1h-1zM157 176h1v1h-1zM164 176h1v1h-1zM172 176h1v1h-1zM180 176h1v1h-1zM188 176h1v1h-1zM196 176h1v1h-1zM203 176h1v1h-1zM211 176h1v1h-1zM219 176h1v1h-1zM227 176h1v1h-1zM235 176h1v1h-1zM242 176h1v1h-1zM250 176h1v1h-1zM258 176h1v1h-1zM266 176h1v1h-1zM274 176h1v1h-1zM281 176h1v1h-1zM289 176h1v1h-1zM297 176h1v1h-1zM305 176h1v1h-1zM313 176h1v1h-1zM320 176h1v1h-1zM328 176h1v1h-1zM336 176h1v1h-1zM344 176h1v1h-1zM351 176h1v1h-1zM359 176h1v1h-1zM367 176h1v1h-1zM375 176h1v1h-1zM383 176h1v1h-1zM390 176h1v1h-1zM398 176h1v1h-1zM406 176h1v1h-1zM1 184h1v1h-1zM9 184h1v1h-1zM16 184h1v1h-1zM24 184h1v1h-1zM32 184h1v1h-1zM40 184h1v1h-1zM48 184h1v1h-1zM55 184h1v1h-1zM63 184h1v1h-1zM71 184h1v1h-1zM79 184h1v1h-1zM87 184h1v1h-1zM94 184h1v1h-1zM102 184h1v1h-1zM110 184h1v1h-1zM118 184h1v1h-1zM126 184h1v1h-1zM133 184h1v1h-1zM141 184h1v1h-1zM149 184h1v1h-1zM157 184h1v1h-1zM164 184h1v1h-1zM172 184h1v1h-1zM180 184h1v1h-1zM188 184h1v1h-1zM196 184h1v1h-1zM203 184h1v1h-1zM211 184h1v1h-1zM219 184h1v1h-1zM227 184h1v1h-1zM235 184h1v1h-1zM242 184h1v1h-1zM250 184h1v1h-1zM258 184h1v1h-1zM266 184h1v1h-1zM274 184h1v1h-1zM281 184h1v1h-1zM289 184h1v1h-1zM297 184h1v1h-1zM305 184h1v1h-1zM313 184h1v1h-1zM320 184h1v1h-1zM328 184h1v1h-1zM336 184h1v1h-1zM344 184h1v1h-1zM351 184h1v1h-1zM359 184h1v1h-1zM367 184h1v1h-1zM375 184h1v1h-1zM383 184h1v1h-1zM390 184h1v1h-1zM398 184h1v1h-1zM406 184h1v1h-1zM1 191h1v1h-1zM9 191h1v1h-1zM16 191h1v1h-1zM24 191h1v1h-1zM32 191h1v1h-1zM40 191h1v1h-1zM48 191h1v1h-1zM55 191h1v1h-1zM63 191h1v1h-1zM71 191h1v1h-1zM79 191h1v1h-1zM87 191h1v1h-1zM94 191h1v1h-1zM102 191h1v1h-1zM110 191h1v1h-1zM118 191h1v1h-1zM126 191h1v1h-1zM133 191h1v1h-1zM141 191h1v1h-1zM149 191h1v1h-1zM157 191h1v1h-1zM164 191h1v1h-1zM172 191h1v1h-1zM180 191h1v1h-1zM188 191h1v1h-1zM196 191h1v1h-1zM203 191h1v1h-1zM211 191h1v1h-1zM219 191h1v1h-1zM227 191h1v1h-1zM235 191h1v1h-1zM242 191h1v1h-1zM250 191h1v1h-1zM258 191h1v1h-1zM266 191h1v1h-1zM274 191h1v1h-1zM281 191h1v1h-1zM289 191h1v1h-1zM297 191h1v1h-1zM305 191h1v1h-1zM313 191h1v1h-1zM320 191h1v1h-1zM328 191h1v1h-1zM336 191h1v1h-1zM344 191h1v1h-1zM351 191h1v1h-1zM359 191h1v1h-1zM367 191h1v1h-1zM375 191h1v1h-1zM383 191h1v1h-1zM390 191h1v1h-1zM398 191h1v1h-1zM406 191h1v1h-1zM1 199h1v1h-1zM9 199h1v1h-1zM16 199h1v1h-1zM24 199h1v1h-1zM32 199h1v1h-1zM40 199h1v1h-1zM48 199h1v1h-1zM55 199h1v1h-1zM63 199h1v1h-1zM71 199h1v1h-1zM79 199h1v1h-1zM87 199h1v1h-1zM94 199h1v1h-1zM102 199h1v1h-1zM110 199h1v1h-1zM118 199h1v1h-1zM126 199h1v1h-1zM133 199h1v1h-1zM141 199h1v1h-1zM149 199h1v1h-1zM157 199h1v1h-1zM164 199h1v1h-1zM172 199h1v1h-1zM180 199h1v1h-1zM188 199h1v1h-1zM196 199h1v1h-1zM203 199h1v1h-1zM211 199h1v1h-1zM219 199h1v1h-1zM227 199h1v1h-1zM235 199h1v1h-1zM242 199h1v1h-1zM250 199h1v1h-1zM258 199h1v1h-1zM266 199h1v1h-1zM274 199h1v1h-1zM281 199h1v1h-1zM289 199h1v1h-1zM297 199h1v1h-1zM305 199h1v1h-1zM313 199h1v1h-1zM320 199h1v1h-1zM328 199h1v1h-1zM336 199h1v1h-1zM344 199h1v1h-1zM351 199h1v1h-1zM359 199h1v1h-1zM367 199h1v1h-1zM375 199h1v1h-1zM383 199h1v1h-1zM390 199h1v1h-1zM398 199h1v1h-1zM406 199h1v1h-1zM1 207h1v1h-1zM9 207h1v1h-1zM16 207h1v1h-1zM24 207h1v1h-1zM32 207h1v1h-1zM40 207h1v1h-1zM48 207h1v1h-1zM55 207h1v1h-1zM63 207h1v1h-1zM71 207h1v1h-1zM79 207h1v1h-1zM87 207h1v1h-1zM94 207h1v1h-1zM102 207h1v1h-1zM110 207h1v1h-1zM118 207h1v1h-1zM126 207h1v1h-1zM133 207h1v1h-1zM141 207h1v1h-1zM149 207h1v1h-1zM157 207h1v1h-1zM164 207h1v1h-1zM172 207h1v1h-1zM180 207h1v1h-1zM188 207h1v1h-1zM196 207h1v1h-1zM203 207h1v1h-1zM211 207h1v1h-1zM219 207h1v1h-1zM227 207h1v1h-1zM235 207h1v1h-1zM242 207h1v1h-1zM250 207h1v1h-1zM258 207h1v1h-1zM266 207h1v1h-1zM274 207h1v1h-1zM281 207h1v1h-1zM289 207h1v1h-1zM297 207h1v1h-1zM305 207h1v1h-1zM313 207h1v1h-1zM320 207h1v1h-1zM328 207h1v1h-1zM336 207h1v1h-1zM344 207h1v1h-1zM351 207h1v1h-1zM359 207h1v1h-1zM367 207h1v1h-1zM375 207h1v1h-1zM383 207h1v1h-1zM390 207h1v1h-1zM398 207h1v1h-1zM406 207h1v1h-1zM1 215h1v1h-1zM9 215h1v1h-1zM16 215h1v1h-1zM24 215h1v1h-1zM32 215h1v1h-1zM40 215h1v1h-1zM48 215h1v1h-1zM55 215h1v1h-1zM63 215h1v1h-1zM71 215h1v1h-1zM79 215h1v1h-1zM87 215h1v1h-1zM94 215h1v1h-1zM102 215h1v1h-1zM110 215h1v1h-1zM118 215h1v1h-1zM126 215h1v1h-1zM133 215h1v1h-1zM141 215h1v1h-1zM149 215h1v1h-1zM157 215h1v1h-1zM164 215h1v1h-1zM172 215h1v1h-1zM180 215h1v1h-1zM188 215h1v1h-1zM196 215h1v1h-1zM203 215h1v1h-1zM211 215h1v1h-1zM219 215h1v1h-1zM227 215h1v1h-1zM235 215h1v1h-1zM242 215h1v1h-1zM250 215h1v1h-1zM258 215h1v1h-1zM266 215h1v1h-1zM274 215h1v1h-1zM281 215h1v1h-1zM289 215h1v1h-1zM297 215h1v1h-1zM305 215h1v1h-1zM313 215h1v1h-1zM320 215h1v1h-1zM328 215h1v1h-1zM336 215h1v1h-1zM344 215h1v1h-1zM351 215h1v1h-1zM359 215h1v1h-1zM367 215h1v1h-1zM375 215h1v1h-1zM383 215h1v1h-1zM390 215h1v1h-1zM398 215h1v1h-1zM406 215h1v1h-1zM1 223h1v1h-1zM9 223h1v1h-1zM16 223h1v1h-1zM24 223h1v1h-1zM32 223h1v1h-1zM40 223h1v1h-1zM48 223h1v1h-1zM55 223h1v1h-1zM63 223h1v1h-1zM71 223h1v1h-1zM79 223h1v1h-1zM87 223h1v1h-1zM94 223h1v1h-1zM102 223h1v1h-1zM110 223h1v1h-1zM118 223h1v1h-1zM126 223h1v1h-1zM133 223h1v1h-1zM141 223h1v1h-1zM149 223h1v1h-1zM157 223h1v1h-1zM164 223h1v1h-1zM172 223h1v1h-1zM180 223h1v1h-1zM188 223h1v1h-1zM196 223h1v1h-1zM203 223h1v1h-1zM211 223h1v1h-1zM219 223h1v1h-1zM227 223h1v1h-1zM235 223h1v1h-1zM242 223h1v1h-1zM250 223h1v1h-1zM258 223h1v1h-1zM266 223h1v1h-1zM274 223h1v1h-1zM281 223h1v1h-1zM289 223h1v1h-1zM297 223h1v1h-1zM305 223h1v1h-1zM313 223h1v1h-1zM320 223h1v1h-1zM328 223h1v1h-1zM336 223h1v1h-1zM344 223h1v1h-1zM351 223h1v1h-1zM359 223h1v1h-1zM367 223h1v1h-1zM375 223h1v1h-1zM383 223h1v1h-1zM390 223h1v1h-1zM398 223h1v1h-1zM406 223h1v1h-1zM1 230h1v1h-1zM9 230h1v1h-1zM16 230h1v1h-1zM24 230h1v1h-1zM32 230h1v1h-1zM40 230h1v1h-1zM48 230h1v1h-1zM55 230h1v1h-1zM63 230h1v1h-1zM71 230h1v1h-1zM79 230h1v1h-1zM87 230h1v1h-1zM94 230h1v1h-1zM102 230h1v1h-1zM110 230h1v1h-1zM118 230h1v1h-1zM126 230h1v1h-1zM133 230h1v1h-1zM141 230h1v1h-1zM149 230h1v1h-1zM157 230h1v1h-1zM164 230h1v1h-1zM172 230h1v1h-1zM180 230h1v1h-1zM188 230h1v1h-1zM196 230h1v1h-1zM203 230h1v1h-1zM211 230h1v1h-1zM219 230h1v1h-1zM227 230h1v1h-1zM235 230h1v1h-1zM242 230h1v1h-1zM250 230h1v1h-1zM258 230h1v1h-1zM266 230h1v1h-1zM274 230h1v1h-1zM281 230h1v1h-1zM289 230h1v1h-1zM297 230h1v1h-1zM305 230h1v1h-1zM313 230h1v1h-1zM320 230h1v1h-1zM328 230h1v1h-1zM336 230h1v1h-1zM344 230h1v1h-1zM351 230h1v1h-1zM359 230h1v1h-1zM367 230h1v1h-1zM375 230h1v1h-1zM383 230h1v1h-1zM390 230h1v1h-1zM398 230h1v1h-1zM406 230h1v1h-1zM1 238h1v1h-1zM9 238h1v1h-1zM16 238h1v1h-1zM24 238h1v1h-1zM32 238h1v1h-1zM40 238h1v1h-1zM48 238h1v1h-1zM55 238h1v1h-1zM63 238h1v1h-1zM71 238h1v1h-1zM79 238h1v1h-1zM87 238h1v1h-1zM94 238h1v1h-1zM102 238h1v1h-1zM110 238h1v1h-1zM118 238h1v1h-1zM126 238h1v1h-1zM133 238h1v1h-1zM141 238h1v1h-1zM149 238h1v1h-1zM157 238h1v1h-1zM164 238h1v1h-1zM172 238h1v1h-1zM180 238h1v1h-1zM188 238h1v1h-1zM196 238h1v1h-1zM203 238h1v1h-1zM211 238h1v1h-1zM219 238h1v1h-1zM227 238h1v1h-1zM235 238h1v1h-1zM242 238h1v1h-1zM250 238h1v1h-1zM258 238h1v1h-1zM266 238h1v1h-1zM274 238h1v1h-1zM281 238h1v1h-1zM289 238h1v1h-1zM297 238h1v1h-1zM305 238h1v1h-1zM313 238h1v1h-1zM320 238h1v1h-1zM328 238h1v1h-1zM336 238h1v1h-1zM344 238h1v1h-1zM351 238h1v1h-1zM359 238h1v1h-1zM367 238h1v1h-1zM375 238h1v1h-1zM383 238h1v1h-1zM390 238h1v1h-1zM398 238h1v1h-1zM406 238h1v1h-1zM1 246h1v1h-1zM9 246h1v1h-1zM16 246h1v1h-1zM24 246h1v1h-1zM32 246h1v1h-1zM40 246h1v1h-1zM48 246h1v1h-1zM55 246h1v1h-1zM63 246h1v1h-1zM71 246h1v1h-1zM79 246h1v1h-1zM87 246h1v1h-1zM94 246h1v1h-1zM102 246h1v1h-1zM110 246h1v1h-1zM118 246h1v1h-1zM126 246h1v1h-1zM133 246h1v1h-1zM141 246h1v1h-1zM149 246h1v1h-1zM157 246h1v1h-1zM164 246h1v1h-1zM172 246h1v1h-1zM180 246h1v1h-1zM188 246h1v1h-1zM196 246h1v1h-1zM203 246h1v1h-1zM211 246h1v1h-1zM219 246h1v1h-1zM227 246h1v1h-1zM235 246h1v1h-1zM242 246h1v1h-1zM250 246h1v1h-1zM258 246h1v1h-1zM266 246h1v1h-1zM274 246h1v1h-1zM281 246h1v1h-1zM289 246h1v1h-1zM297 246h1v1h-1zM305 246h1v1h-1zM313 246h1v1h-1zM320 246h1v1h-1zM328 246h1v1h-1zM336 246h1v1h-1zM344 246h1v1h-1zM351 246h1v1h-1zM359 246h1v1h-1zM367 246h1v1h-1zM375 246h1v1h-1zM383 246h1v1h-1zM390 246h1v1h-1zM398 246h1v1h-1zM406 246h1v1h-1zM1 254h1v1h-1zM9 254h1v1h-1zM16 254h1v1h-1zM24 254h1v1h-1zM32 254h1v1h-1zM40 254h1v1h-1zM48 254h1v1h-1zM55 254h1v1h-1zM63 254h1v1h-1zM71 254h1v1h-1zM79 254h1v1h-1zM87 254h1v1h-1zM94 254h1v1h-1zM102 254h1v1h-1zM110 254h1v1h-1zM118 254h1v1h-1zM126 254h1v1h-1zM133 254h1v1h-1zM141 254h1v1h-1zM149 254h1v1h-1zM157 254h1v1h-1zM164 254h1v1h-1zM172 254h1v1h-1zM180 254h1v1h-1zM188 254h1v1h-1zM196 254h1v1h-1zM203 254h1v1h-1zM211 254h1v1h-1zM219 254h1v1h-1zM227 254h1v1h-1zM235 254h1v1h-1zM242 254h1v1h-1zM250 254h1v1h-1zM258 254h1v1h-1zM266 254h1v1h-1zM274 254h1v1h-1zM281 254h1v1h-1zM289 254h1v1h-1zM297 254h1v1h-1zM305 254h1v1h-1zM313 254h1v1h-1zM320 254h1v1h-1zM328 254h1v1h-1zM336 254h1v1h-1zM344 254h1v1h-1zM351 254h1v1h-1zM359 254h1v1h-1zM367 254h1v1h-1zM375 254h1v1h-1zM383 254h1v1h-1zM390 254h1v1h-1zM398 254h1v1h-1zM406 254h1v1h-1zM1 262h1v1h-1zM9 262h1v1h-1zM16 262h1v1h-1zM24 262h1v1h-1zM32 262h1v1h-1zM40 262h1v1h-1zM48 262h1v1h-1zM55 262h1v1h-1zM63 262h1v1h-1zM71 262h1v1h-1zM79 262h1v1h-1zM87 262h1v1h-1zM94 262h1v1h-1zM102 262h1v1h-1zM110 262h1v1h-1zM118 262h1v1h-1zM126 262h1v1h-1zM133 262h1v1h-1zM141 262h1v1h-1zM149 262h1v1h-1zM157 262h1v1h-1zM164 262h1v1h-1zM172 262h1v1h-1zM180 262h1v1h-1zM188 262h1v1h-1zM196 262h1v1h-1zM203 262h1v1h-1zM211 262h1v1h-1zM219 262h1v1h-1zM227 262h1v1h-1zM235 262h1v1h-1zM242 262h1v1h-1zM250 262h1v1h-1zM258 262h1v1h-1zM266 262h1v1h-1zM274 262h1v1h-1zM281 262h1v1h-1zM289 262h1v1h-1zM297 262h1v1h-1zM305 262h1v1h-1zM313 262h1v1h-1zM320 262h1v1h-1zM328 262h1v1h-1zM336 262h1v1h-1zM344 262h1v1h-1zM351 262h1v1h-1zM359 262h1v1h-1zM367 262h1v1h-1zM375 262h1v1h-1zM383 262h1v1h-1zM390 262h1v1h-1zM398 262h1v1h-1zM406 262h1v1h-1zM1 269h1v1h-1zM9 269h1v1h-1zM16 269h1v1h-1zM24 269h1v1h-1zM32 269h1v1h-1zM40 269h1v1h-1zM48 269h1v1h-1zM55 269h1v1h-1zM63 269h1v1h-1zM71 269h1v1h-1zM79 269h1v1h-1zM87 269h1v1h-1zM94 269h1v1h-1zM102 269h1v1h-1zM110 269h1v1h-1zM118 269h1v1h-1zM126 269h1v1h-1zM133 269h1v1h-1zM141 269h1v1h-1zM149 269h1v1h-1zM157 269h1v1h-1zM164 269h1v1h-1zM172 269h1v1h-1zM180 269h1v1h-1zM188 269h1v1h-1zM196 269h1v1h-1zM203 269h1v1h-1zM211 269h1v1h-1zM219 269h1v1h-1zM227 269h1v1h-1zM235 269h1v1h-1zM242 269h1v1h-1zM250 269h1v1h-1zM258 269h1v1h-1zM266 269h1v1h-1zM274 269h1v1h-1zM281 269h1v1h-1zM289 269h1v1h-1zM297 269h1v1h-1zM305 269h1v1h-1zM313 269h1v1h-1zM320 269h1v1h-1zM328 269h1v1h-1zM336 269h1v1h-1zM344 269h1v1h-1zM351 269h1v1h-1zM359 269h1v1h-1zM367 269h1v1h-1zM375 269h1v1h-1zM383 269h1v1h-1zM390 269h1v1h-1zM398 269h1v1h-1zM406 269h1v1h-1zM1 277h1v1h-1zM9 277h1v1h-1zM16 277h1v1h-1zM24 277h1v1h-1zM32 277h1v1h-1zM40 277h1v1h-1zM48 277h1v1h-1zM55 277h1v1h-1zM63 277h1v1h-1zM71 277h1v1h-1zM79 277h1v1h-1zM87 277h1v1h-1zM94 277h1v1h-1zM102 277h1v1h-1zM110 277h1v1h-1zM118 277h1v1h-1zM126 277h1v1h-1zM133 277h1v1h-1zM141 277h1v1h-1zM149 277h1v1h-1zM157 277h1v1h-1zM164 277h1v1h-1zM172 277h1v1h-1zM180 277h1v1h-1zM188 277h1v1h-1zM196 277h1v1h-1zM203 277h1v1h-1zM211 277h1v1h-1zM219 277h1v1h-1zM227 277h1v1h-1zM235 277h1v1h-1zM242 277h1v1h-1zM250 277h1v1h-1zM258 277h1v1h-1zM266 277h1v1h-1zM274 277h1v1h-1zM281 277h1v1h-1zM289 277h1v1h-1zM297 277h1v1h-1zM305 277h1v1h-1zM313 277h1v1h-1zM320 277h1v1h-1zM328 277h1v1h-1zM336 277h1v1h-1zM344 277h1v1h-1zM351 277h1v1h-1zM359 277h1v1h-1zM367 277h1v1h-1zM375 277h1v1h-1zM383 277h1v1h-1zM390 277h1v1h-1zM398 277h1v1h-1zM406 277h1v1h-1zM1 285h1v1h-1zM9 285h1v1h-1zM16 285h1v1h-1zM24 285h1v1h-1zM32 285h1v1h-1zM40 285h1v1h-1zM48 285h1v1h-1zM55 285h1v1h-1zM63 285h1v1h-1zM71 285h1v1h-1zM79 285h1v1h-1zM87 285h1v1h-1zM94 285h1v1h-1zM102 285h1v1h-1zM110 285h1v1h-1zM118 285h1v1h-1zM126 285h1v1h-1zM133 285h1v1h-1zM141 285h1v1h-1zM149 285h1v1h-1zM157 285h1v1h-1zM164 285h1v1h-1zM172 285h1v1h-1zM180 285h1v1h-1zM188 285h1v1h-1zM196 285h1v1h-1zM203 285h1v1h-1zM211 285h1v1h-1zM219 285h1v1h-1zM227 285h1v1h-1zM235 285h1v1h-1zM242 285h1v1h-1zM250 285h1v1h-1zM258 285h1v1h-1zM266 285h1v1h-1zM274 285h1v1h-1zM281 285h1v1h-1zM289 285h1v1h-1zM297 285h1v1h-1zM305 285h1v1h-1zM313 285h1v1h-1zM320 285h1v1h-1zM328 285h1v1h-1zM336 285h1v1h-1zM344 285h1v1h-1zM351 285h1v1h-1zM359 285h1v1h-1zM367 285h1v1h-1zM375 285h1v1h-1zM383 285h1v1h-1zM390 285h1v1h-1zM398 285h1v1h-1zM406 285h1v1h-1zM1 293h1v1h-1zM9 293h1v1h-1zM16 293h1v1h-1zM24 293h1v1h-1zM32 293h1v1h-1zM40 293h1v1h-1zM48 293h1v1h-1zM55 293h1v1h-1zM63 293h1v1h-1zM71 293h1v1h-1zM79 293h1v1h-1zM87 293h1v1h-1zM94 293h1v1h-1zM102 293h1v1h-1zM110 293h1v1h-1zM118 293h1v1h-1zM126 293h1v1h-1zM133 293h1v1h-1zM141 293h1v1h-1zM149 293h1v1h-1zM157 293h1v1h-1zM164 293h1v1h-1zM172 293h1v1h-1zM180 293h1v1h-1zM188 293h1v1h-1zM196 293h1v1h-1zM203 293h1v1h-1zM211 293h1v1h-1zM219 293h1v1h-1zM227 293h1v1h-1zM235 293h1v1h-1zM242 293h1v1h-1zM250 293h1v1h-1zM258 293h1v1h-1zM266 293h1v1h-1zM274 293h1v1h-1zM281 293h1v1h-1zM289 293h1v1h-1zM297 293h1v1h-1zM305 293h1v1h-1zM313 293h1v1h-1zM320 293h1v1h-1zM328 293h1v1h-1zM336 293h1v1h-1zM344 293h1v1h-1zM351 293h1v1h-1zM359 293h1v1h-1zM367 293h1v1h-1zM375 293h1v1h-1zM383 293h1v1h-1zM390 293h1v1h-1zM398 293h1v1h-1zM406 293h1v1h-1zM1 301h1v1h-1zM9 301h1v1h-1zM16 301h1v1h-1zM24 301h1v1h-1zM32 301h1v1h-1zM40 301h1v1h-1zM48 301h1v1h-1zM55 301h1v1h-1zM63 301h1v1h-1zM71 301h1v1h-1zM79 301h1v1h-1zM87 301h1v1h-1zM94 301h1v1h-1zM102 301h1v1h-1zM110 301h1v1h-1zM118 301h1v1h-1zM126 301h1v1h-1zM133 301h1v1h-1zM141 301h1v1h-1zM149 301h1v1h-1zM157 301h1v1h-1zM164 301h1v1h-1zM172 301h1v1h-1zM180 301h1v1h-1zM188 301h1v1h-1zM196 301h1v1h-1zM203 301h1v1h-1zM211 301h1v1h-1zM219 301h1v1h-1zM227 301h1v1h-1zM235 301h1v1h-1zM242 301h1v1h-1zM250 301h1v1h-1zM258 301h1v1h-1zM266 301h1v1h-1zM274 301h1v1h-1zM281 301h1v1h-1zM289 301h1v1h-1zM297 301h1v1h-1zM305 301h1v1h-1zM313 301h1v1h-1zM320 301h1v1h-1zM328 301h1v1h-1zM336 301h1v1h-1zM344 301h1v1h-1zM351 301h1v1h-1zM359 301h1v1h-1zM367 301h1v1h-1zM375 301h1v1h-1zM383 301h1v1h-1zM390 301h1v1h-1zM398 301h1v1h-1zM406 301h1v1h-1zM1 308h1v1h-1zM9 308h1v1h-1zM16 308h1v1h-1zM24 308h1v1h-1zM32 308h1v1h-1zM40 308h1v1h-1zM48 308h1v1h-1zM55 308h1v1h-1zM63 308h1v1h-1zM71 308h1v1h-1zM79 308h1v1h-1zM87 308h1v1h-1zM94 308h1v1h-1zM102 308h1v1h-1zM110 308h1v1h-1zM118 308h1v1h-1zM126 308h1v1h-1zM133 308h1v1h-1zM141 308h1v1h-1zM149 308h1v1h-1zM157 308h1v1h-1zM164 308h1v1h-1zM172 308h1v1h-1zM180 308h1v1h-1zM188 308h1v1h-1zM196 308h1v1h-1zM203 308h1v1h-1zM211 308h1v1h-1zM219 308h1v1h-1zM227 308h1v1h-1zM235 308h1v1h-1zM242 308h1v1h-1zM250 308h1v1h-1zM258 308h1v1h-1zM266 308h1v1h-1zM274 308h1v1h-1zM281 308h1v1h-1zM289 308h1v1h-1zM297 308h1v1h-1zM305 308h1v1h-1zM313 308h1v1h-1zM320 308h1v1h-1zM328 308h1v1h-1zM336 308h1v1h-1zM344 308h1v1h-1zM351 308h1v1h-1zM359 308h1v1h-1zM367 308h1v1h-1zM375 308h1v1h-1zM383 308h1v1h-1zM390 308h1v1h-1zM398 308h1v1h-1zM406 308h1v1h-1zM1 316h1v1h-1zM9 316h1v1h-1zM16 316h1v1h-1zM24 316h1v1h-1zM32 316h1v1h-1zM40 316h1v1h-1zM48 316h1v1h-1zM55 316h1v1h-1zM63 316h1v1h-1zM71 316h1v1h-1zM79 316h1v1h-1zM87 316h1v1h-1zM94 316h1v1h-1zM102 316h1v1h-1zM110 316h1v1h-1zM118 316h1v1h-1zM126 316h1v1h-1zM133 316h1v1h-1zM141 316h1v1h-1zM149 316h1v1h-1zM157 316h1v1h-1zM164 316h1v1h-1zM172 316h1v1h-1zM180 316h1v1h-1zM188 316h1v1h-1zM196 316h1v1h-1zM203 316h1v1h-1zM211 316h1v1h-1zM219 316h1v1h-1zM227 316h1v1h-1zM235 316h1v1h-1zM242 316h1v1h-1zM250 316h1v1h-1zM258 316h1v1h-1zM266 316h1v1h-1zM274 316h1v1h-1zM281 316h1v1h-1zM289 316h1v1h-1zM297 316h1v1h-1zM305 316h1v1h-1zM313 316h1v1h-1zM320 316h1v1h-1zM328 316h1v1h-1zM336 316h1v1h-1zM344 316h1v1h-1zM351 316h1v1h-1zM359 316h1v1h-1zM367 316h1v1h-1zM375 316h1v1h-1zM383 316h1v1h-1zM390 316h1v1h-1zM398 316h1v1h-1zM406 316h1v1h-1zM1 324h1v1h-1zM9 324h1v1h-1zM16 324h1v1h-1zM24 324h1v1h-1zM32 324h1v1h-1zM40 324h1v1h-1zM48 324h1v1h-1zM55 324h1v1h-1zM63 324h1v1h-1zM71 324h1v1h-1zM79 324h1v1h-1zM87 324h1v1h-1zM94 324h1v1h-1zM102 324h1v1h-1zM110 324h1v1h-1zM118 324h1v1h-1zM126 324h1v1h-1zM133 324h1v1h-1zM141 324h1v1h-1zM149 324h1v1h-1zM157 324h1v1h-1zM164 324h1v1h-1zM172 324h1v1h-1zM180 324h1v1h-1zM188 324h1v1h-1zM196 324h1v1h-1zM203 324h1v1h-1zM211 324h1v1h-1zM219 324h1v1h-1zM227 324h1v1h-1zM235 324h1v1h-1zM242 324h1v1h-1zM250 324h1v1h-1zM258 324h1v1h-1zM266 324h1v1h-1zM274 324h1v1h-1zM281 324h1v1h-1zM289 324h1v1h-1zM297 324h1v1h-1zM305 324h1v1h-1zM313 324h1v1h-1zM320 324h1v1h-1zM328 324h1v1h-1zM336 324h1v1h-1zM344 324h1v1h-1zM351 324h1v1h-1zM359 324h1v1h-1zM367 324h1v1h-1zM375 324h1v1h-1zM383 324h1v1h-1zM390 324h1v1h-1zM398 324h1v1h-1zM406 324h1v1h-1zM1 332h1v1h-1zM9 332h1v1h-1zM16 332h1v1h-1zM24 332h1v1h-1zM32 332h1v1h-1zM40 332h1v1h-1zM48 332h1v1h-1zM55 332h1v1h-1zM63 332h1v1h-1zM71 332h1v1h-1zM79 332h1v1h-1zM87 332h1v1h-1zM94 332h1v1h-1zM102 332h1v1h-1zM110 332h1v1h-1zM118 332h1v1h-1zM126 332h1v1h-1zM133 332h1v1h-1zM141 332h1v1h-1zM149 332h1v1h-1zM157 332h1v1h-1zM164 332h1v1h-1zM172 332h1v1h-1zM180 332h1v1h-1zM188 332h1v1h-1zM196 332h1v1h-1zM203 332h1v1h-1zM211 332h1v1h-1zM219 332h1v1h-1zM227 332h1v1h-1zM235 332h1v1h-1zM242 332h1v1h-1zM250 332h1v1h-1zM258 332h1v1h-1zM266 332h1v1h-1zM274 332h1v1h-1zM281 332h1v1h-1zM289 332h1v1h-1zM297 332h1v1h-1zM305 332h1v1h-1zM313 332h1v1h-1zM320 332h1v1h-1zM328 332h1v1h-1zM336 332h1v1h-1zM344 332h1v1h-1zM351 332h1v1h-1zM359 332h1v1h-1zM367 332h1v1h-1zM375 332h1v1h-1zM383 332h1v1h-1zM390 332h1v1h-1zM398 332h1v1h-1zM406 332h1v1h-1z" fill="#e8e8e8"/>
<rect x="93" y="62" width="6" height="1" fill="#80e0b0"/>
<path d="M323 265 v11 l2.5-2.5 l2 4.5 l2-1 l-2-4.2 h3.5 z" fill="#fff" shape-rendering="auto"/>
</svg>
<div style="left:415px;top:89px;width:1px;height:340px;background:#fff"></div>
<div style="left:2px;top:428px;width:413px;height:1px;background:#fff"></div>
<div style="left:415px;top:89px;width:183px;height:341px;border-top:1px solid #fff;border-left:1px solid #fff;border-bottom:1px solid #606060;box-sizing:border-box"></div>
<svg style="position:absolute;left:418px;top:91px" width="177" height="291" viewBox="0 0 177 291">
<path d="M0.5 290 V0.5 H175.5 V289.5" fill="none" stroke="#000" stroke-width="1"/>
<path d="M0.5 289.5 H175.5" fill="none" stroke="#404040" stroke-width="1"/>
<path d="M0.5 22.5 H3 L8.5 3.5 H50.5 L56 22.5 H61 L66.5 3.5 H109.5 L114 22.5 H119 L124.5 3.5 H168 L172.5 22.5 H175.5" fill="none" stroke="#000" stroke-width="1"/>
</svg>
<span class="t" style="left:432.00px;top:100px;font:10px 'Liberation Sans';line-height:1;transform:scaleX(0.897);">Options</span>
<span class="t" style="left:496.79px;top:100px;font:10px 'Liberation Sans';line-height:1;transform:scaleX(0.906);">Find</span>
<span class="t" style="left:548.00px;top:100px;font:10px 'Liberation Sans';line-height:1;transform:scaleX(0.872);">Visibility</span>
<span class="t" style="left:425.00px;top:132px;font:10px 'Liberation Sans';line-height:1;transform:scaleX(0.906);">Active Class and Subclass:</span>
<div style="left:448px;top:155px;width:129px;height:17px;background:#fff;border-top:1px solid #808080;border-left:1px solid #808080;border-right:1px solid #fff;border-bottom:1px solid #fff;box-sizing:border-box"></div>
<div style="left:449px;top:156px;width:127px;height:15px;border-top:1px solid #404040;border-left:1px solid #404040;border-right:1px solid #d4d0c8;border-bottom:1px solid #d4d0c8;box-sizing:border-box"></div>
<div style="left:561px;top:157px;width:14px;height:13px;background:#d4d0c8;border-top:1px solid #fff;border-left:1px solid #fff;border-right:1px solid #404040;border-bottom:1px solid #404040;box-sizing:border-box"></div>
<svg style="position:absolute;left:564px;top:161px" width="7" height="4" viewBox="0 0 7 4"><path d="M0 0 H7 L3.5 4z" fill="#000"/></svg>
<span class="t" style="left:451.58px;top:160px;font:10px 'Liberation Sans';line-height:1;transform:scaleX(1.021);">Etch</span>
<div style="left:448px;top:184px;width:129px;height:19px;background:#fff;border-top:1px solid #808080;border-left:1px solid #808080;border-right:1px solid #fff;border-bottom:1px solid #fff;box-sizing:border-box"></div>
<div style="left:449px;top:185px;width:127px;height:17px;border-top:1px solid #404040;border-left:1px solid #404040;border-right:1px solid #d4d0c8;border-bottom:1px solid #d4d0c8;box-sizing:border-box"></div>
<div style="left:561px;top:186px;width:14px;height:15px;background:#d4d0c8;border-top:1px solid #fff;border-left:1px solid #fff;border-right:1px solid #404040;border-bottom:1px solid #404040;box-sizing:border-box"></div>
<svg style="position:absolute;left:564px;top:191px" width="7" height="4" viewBox="0 0 7 4"><path d="M0 0 H7 L3.5 4z" fill="#000"/></svg>
<div style="left:453px;top:187px;width:10px;height:12px;background:#18ec74;border:1px solid #000;box-sizing:border-box"></div>
<span class="t" style="left:468.20px;top:187px;font:10px 'Liberation Sans';line-height:1;transform:scaleX(1.113);">Top</span>
<div style="left:431px;top:185px;width:11px;height:12px;background:#18ec74;border-top:1px solid #808080;border-left:1px solid #808080;border-right:1px solid #000;border-bottom:1px solid #000;box-shadow:inset -1px -1px 0 #fff;box-sizing:border-box"></div>
<div style="left:419px;top:381px;width:175px;height:46px;border:1px solid #fff;border-bottom-color:#808080;box-sizing:border-box"></div>
<div style="left:420px;top:382px;width:173px;height:43px;background:#000;border:1px solid #fff;box-sizing:border-box"></div>
<div style="left:471px;top:383px;width:1px;height:41px;background:#fff"></div>
<div style="left:2px;top:430px;width:596px;height:1px;background:#fff"></div>
<div style="left:5px;top:432px;width:414px;height:62px;background:#fff;border:1px solid #000;box-sizing:border-box"></div>
<span class="t" style="left:7.20px;top:435px;font:10px 'Liberation Sans';line-height:1;transform:scaleX(0.904);">E- Command not found: Esc</span>
<span class="t" style="left:7.20px;top:446px;font:10px 'Liberation Sans';line-height:1;transform:scaleX(0.904);">E- Command not found: Esc</span>
<span class="t" style="left:7.20px;top:458px;font:10px 'Liberation Sans';line-height:1;transform:scaleX(0.904);">E- Command not found: Esc</span>
<span class="t" style="left:7.20px;top:469px;font:10px 'Liberation Sans';line-height:1;transform:scaleX(0.904);">E- Command not found: Esc</span>
<span class="t" style="left:7.24px;top:480px;font:10px 'Liberation Sans';line-height:1;transform:scaleX(0.864);">Command</span>
<span class="t" style="left:50.25px;top:480px;font:10px 'Liberation Sans';line-height:1;transform:scaleX(0.750);color:#909090">&gt;</span>
<div style="left:403px;top:433px;width:15px;height:60px;background:repeating-conic-gradient(#fff 0 25%,#d4d0c8 0 50%) 0 0/2px 2px;border-left:1px solid #000;box-sizing:border-box"></div>
<div style="left:404px;top:433px;width:14px;height:12px;background:#d4d0c8;border-top:1px solid #fff;border-left:1px solid #fff;border-right:1px solid #000;border-bottom:1px solid #000;box-sizing:border-box"></div>
<svg style="position:absolute;left:404px;top:433px" width="14" height="12" viewBox="0 0 14 12"><path d="M3.5 8 h7 l-3.5-3.5z" fill="#000"/></svg>
<div style="left:404px;top:474px;width:14px;height:6px;background:#d4d0c8;border-top:1px solid #fff;border-left:1px solid #fff;border-right:1px solid #000;border-bottom:1px solid #000;box-sizing:border-box"></div>
<div style="left:404px;top:480px;width:14px;height:13px;background:#d4d0c8;border-top:1px solid #fff;border-left:1px solid #fff;border-right:1px solid #000;border-bottom:1px solid #000;box-sizing:border-box"></div>
<svg style="position:absolute;left:404px;top:480px" width="14" height="13" viewBox="0 0 14 13"><path d="M3.5 5 h7 l-3.5 3.5z" fill="#000"/></svg>
<div style="left:419px;top:432px;width:176px;height:63px;border-top:1px solid #000;border-left:1px solid #000;border-right:1px solid #fff;border-bottom:1px solid #fff;box-sizing:border-box"></div>
<div style="left:420px;top:433px;width:174px;height:61px;border-top:1px solid #d4d0c8;border-left:1px solid #d4d0c8;border-right:1px solid #000;border-bottom:1px solid #000;box-sizing:border-box"></div>
<div style="left:421px;top:434px;width:172px;height:59px;border-right:1px solid #fff;border-bottom:1px solid #fff;box-sizing:border-box"></div>
<div style="left:425px;top:435px;width:11px;height:12px;background:#00ee00;border:1px solid #204020;box-sizing:border-box"></div>
<span class="t" style="left:436.66px;top:438px;font:10px 'Liberation Sans';line-height:1;transform:scaleX(0.841);">Cmd:</span>
<span class="t" style="left:467.13px;top:438px;font:10px 'Liberation Sans';line-height:1;transform:scaleX(0.867);">Idle</span>
<div style="left:424px;top:454px;width:16px;height:13px;background:#d4d0c8;border-top:1px solid #fff;border-left:1px solid #fff;border-right:1px solid #000;border-bottom:1px solid #000;box-sizing:border-box"></div>
<span class="t" style="left:429.00px;top:456px;font:10px 'Liberation Sans';line-height:1;transform:scaleX(1.000);">P</span>
<div style="left:442px;top:454px;width:16px;height:13px;background:#d4d0c8;border-top:1px solid #fff;border-left:1px solid #fff;border-right:1px solid #000;border-bottom:1px solid #000;box-sizing:border-box"></div>
<span class="t" style="left:447.00px;top:456px;font:10px 'Liberation Sans';line-height:1;transform:scaleX(0.900);">A</span>
<span class="t" style="left:460.56px;top:457px;font:10px 'Liberation Sans';line-height:1;transform:scaleX(0.937);">16450.0, 3500.0</span>
<div style="left:551px;top:472px;width:36px;height:14px;background:#d4d0c8;border-top:1px solid #fff;border-left:1px solid #fff;border-right:1px solid #000;border-bottom:1px solid #000;box-sizing:border-box"></div>
<span class="t" style="left:559.15px;top:475px;font:10px 'Liberation Sans';line-height:1;transform:scaleX(0.853);color:#808080;text-shadow:1px 1px 0 #fff">Stop</span>
</body></html>
